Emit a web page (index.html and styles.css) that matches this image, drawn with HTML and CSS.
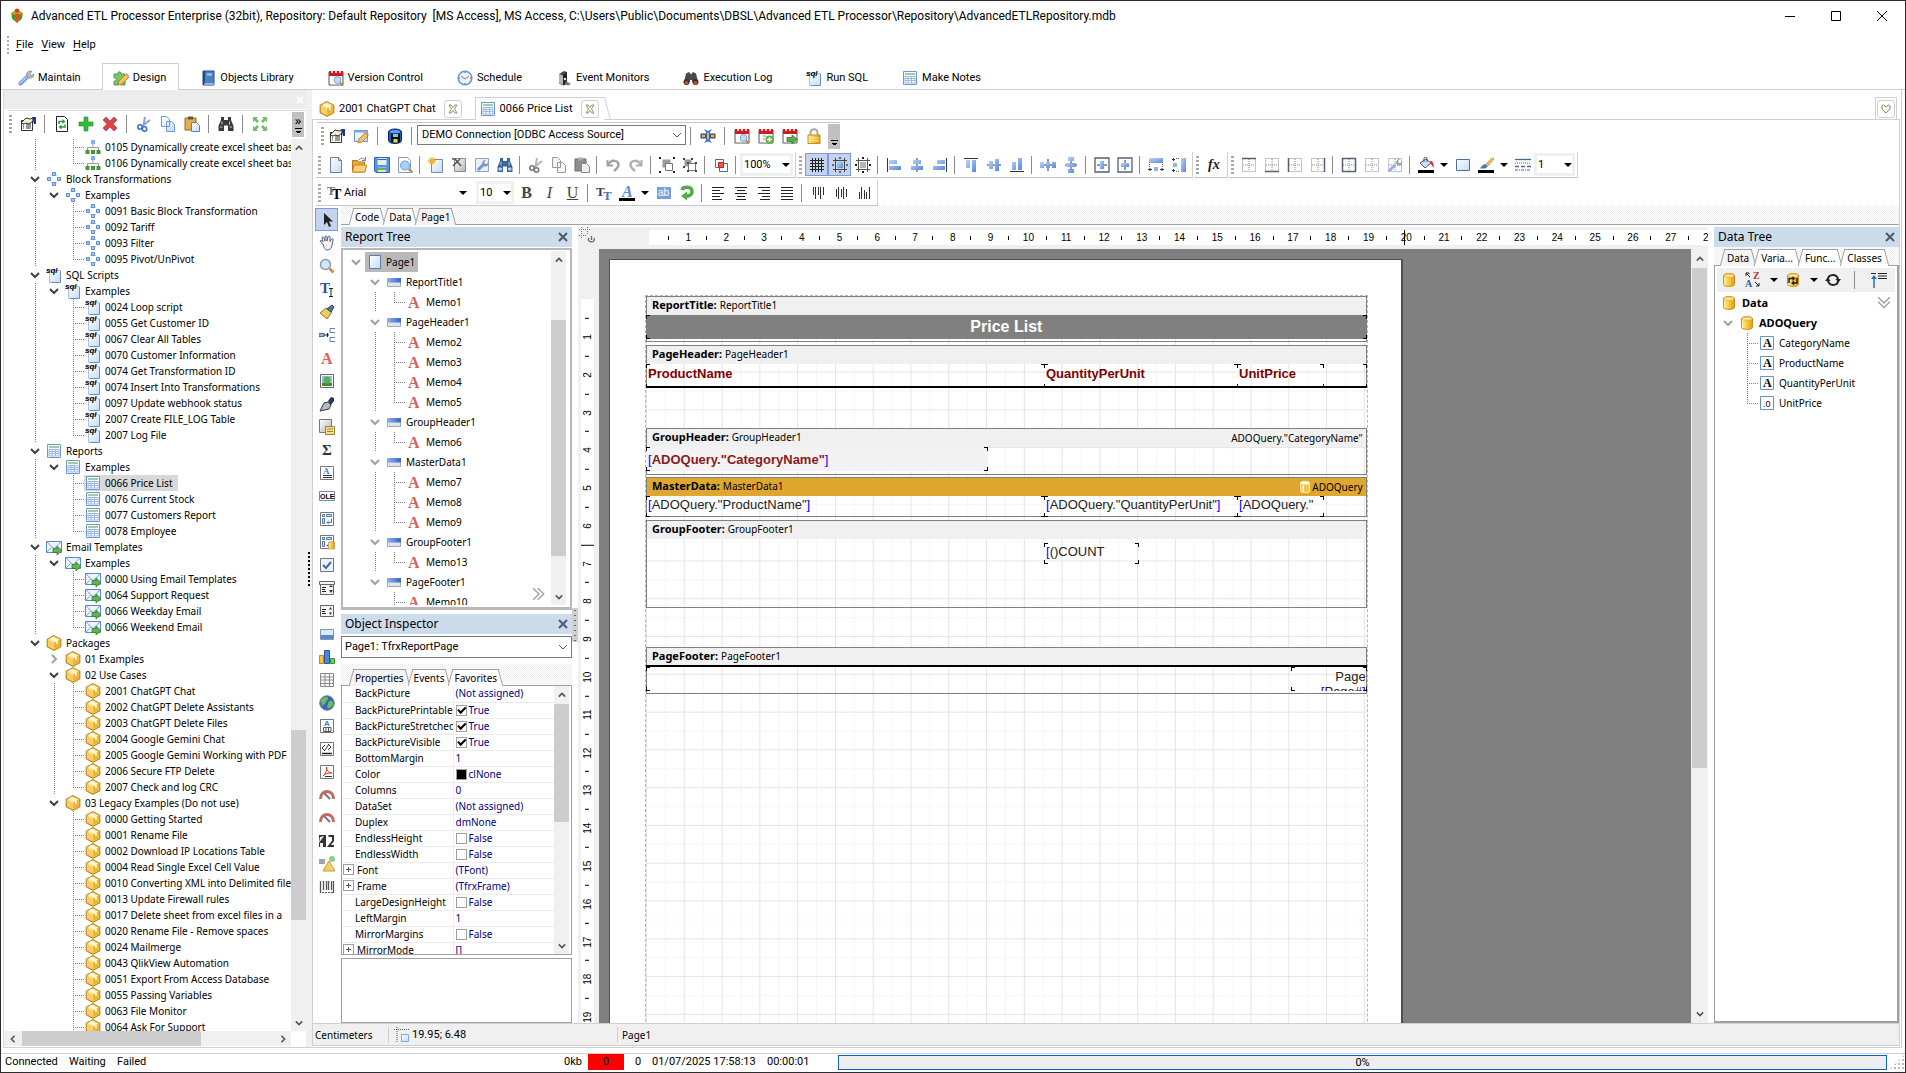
FILE: index.html
```html
<!DOCTYPE html>
<html lang="en">
<head>
  <meta charset="utf-8">
  <title>Advanced ETL Processor Enterprise</title>
  <link rel="stylesheet" href="styles.css">
</head>
<body>

  <!-- gradients -->
  <svg class="defs" aria-hidden="true">
    <linearGradient id="gBlue" x1="0" y1="0" x2="1" y2="1"><stop offset="0" stop-color="#b9d6fb"/><stop offset="1" stop-color="#5b87d8"/></linearGradient>
    <linearGradient id="gPaper" x1="0" y1="0" x2="1" y2="1"><stop offset="0" stop-color="#ffffff"/><stop offset="1" stop-color="#c3daf8"/></linearGradient>
    <linearGradient id="gGold" x1="0" y1="0" x2="1" y2="0"><stop offset="0" stop-color="#fff0a8"/><stop offset=".5" stop-color="#f7c843"/><stop offset="1" stop-color="#e09a1a"/></linearGradient>
    <linearGradient id="gGrey" x1="0" y1="0" x2="1" y2="1"><stop offset="0" stop-color="#ffffff"/><stop offset="1" stop-color="#b4b4b4"/></linearGradient>
    <linearGradient id="gBand" x1="0" y1="0" x2="1" y2="0"><stop offset="0" stop-color="#8fb3ec"/><stop offset="1" stop-color="#3566c0"/></linearGradient>
  </svg>

  <!-- icon sprite -->
  <svg class="sprite" aria-hidden="true">
    <symbol id="logo" viewBox="0 0 16 16"><circle cx="8" cy="3" r="2.500" fill="#c8452a"/><path d="M2 5l3-2 3 2 3-2 3 2-1 6-5 4-5-4z" fill="#c99a1c"/><path d="M3 6l3 1v6l-3-3zM13 6l-3 1v6l3-3z" fill="#3f9a35"/><path d="M6 6h4v6l-2 3-2-3z" fill="#d2562c"/></symbol>
    <symbol id="wrench" viewBox="0 0 16 16"><path d="M2.500 13.500L9 7" stroke="#6f9ae2" stroke-width="4" stroke-linecap="round"/><path d="M2.500 13L9 6.500" stroke="#b7d0f6" stroke-width="1.500" stroke-linecap="round"/><path d="M14 1.500l-2 2 .5 1.500 1.500.5 1.700-1.700c.4 2.200-1 4.200-3.200 4.200-2.500 0-4.200-1.500-4-3.700C8.700 2 11 .3 14 1.500z" fill="#b9bcc2" stroke="#74777e" stroke-width=".7"/></symbol>
    <symbol id="design" viewBox="0 0 16 16"><path d="M1 4h4c-1-3 4-3 3 0h4v3c3-1 3 3 0 3v5H8c1-3-4-3-3 0H1v-4c3 1 3-4 0-3z" fill="#7cc46c" stroke="#3c8a39" stroke-width=".8"/><path d="M5 15l1-4 7-7 3 3-7 7z" fill="#f3c75a" stroke="#a8741d" stroke-width=".8"/><path d="M12 4.500l1.500-1.500 3 3-1.500 1.500z" fill="#e79a8e"/></symbol>
    <symbol id="book" viewBox="0 0 16 16"><path d="M3 1h11v14H3z" fill="#4d83c4" stroke="#1e4a86"/><path d="M3 1h2v14H3z" fill="#20487f"/><path d="M7 3.500h5v2H7z" fill="#a9caf0"/><path d="M4 14h10" stroke="#dfe9f6"/></symbol>
    <symbol id="cal" viewBox="0 0 16 16"><path d="M1 2h14v13H1z" fill="#fff" stroke="#555"/><path d="M1 1h14v5H1z" fill="#d31920"/><path d="M4 0v3M8 0v3M12 0v3" stroke="#fff" stroke-width="1.500"/><path d="M3 14.500h10" stroke="#bbb"/></symbol>
    <symbol id="calfind" viewBox="0 0 16 16"><use href="#cal"/><circle cx="9.500" cy="10" r="3.500" fill="#bcdcf5" stroke="#7fa6cc"/><path d="M12 12.500l3 3" stroke="#b98550" stroke-width="2"/></symbol>
    <symbol id="caladd" viewBox="0 0 16 16"><use href="#cal"/><path d="M5 8h3M5 11h2" stroke="#888"/><circle cx="11.500" cy="11.500" r="4" fill="#5cae42"/><path d="M11.500 9v5M9 11.500h5" stroke="#fff" stroke-width="1.500"/></symbol>
    <symbol id="calgo" viewBox="0 0 16 16"><use href="#cal"/><path d="M5 9.500h5V7l5.500 4.500L10 16v-2.500H5z" fill="#57b04a" stroke="#2c7d28" stroke-width=".8"/></symbol>
    <symbol id="clock" viewBox="0 0 16 16"><circle cx="8" cy="8" r="6.800" fill="#edf4fe" stroke="#6d95d8" stroke-width="1.600"/><path d="M4 6l4 3 4-3" fill="none" stroke="#b06a50"/><path d="M8 2v1M8 13v1M2 8h1M13 8h1" stroke="#456"/></symbol>
    <symbol id="server" viewBox="0 0 16 16"><path d="M3 4l5-3 3 1v12l-4 1.500-4-2z" fill="#444"/><path d="M3 4l4 1.500V15l-4-2z" fill="#b5b5b5"/><path d="M7 5.500L11 2v12l-4 1z" fill="#222"/><circle cx="9" cy="9" r="1.300" fill="#ddd"/><path d="M10 11l5 3-3 1.500-3-1z" fill="#777"/></symbol>
    <symbol id="execlog" viewBox="0 0 16 16"><path d="M1 12L3 3.500 6 2l1.500 2h1L10 2l3 1.500 2 8.500" fill="#4a4a4a"/><path d="M6.500 6h3v4h-3z" fill="#4a4a4a"/><circle cx="3.500" cy="12" r="3" fill="#333"/><circle cx="12.500" cy="12" r="3" fill="#333"/><circle cx="3.500" cy="12.800" r="1.800" fill="#d8452b"/><circle cx="12.500" cy="12.800" r="1.800" fill="#d8452b"/><path d="M7 10h2v6H7z" fill="#fff"/></symbol>
    <symbol id="sql" viewBox="0 0 16 16"><path d="M3.500 3.500h11v12h-11z" fill="url(#gPaper)" stroke="#a9c3e6"/><path d="M14.500 4v11.500H5" fill="none" stroke="#6d8fbe"/><text x="0" y="6" font-family="Liberation Sans" font-size="8" font-weight="bold" font-style="italic">sql</text></symbol>
    <symbol id="table" viewBox="0 0 16 16"><path d="M1.500 1.500h13v13h-13z" fill="#fff" stroke="#6c97d6"/><path d="M3 4h10" stroke="#7cc274" stroke-width="1.500"/><path d="M3 6.500h10v6.500H3zM3 8.500h10M3 10.500h10M6 6.500V13M9.500 6.500V13" fill="none" stroke="#8fb0e2" stroke-width=".9"/></symbol>
    <symbol id="props" viewBox="0 0 16 16"><path d="M1.500 4.500h11v10h-11z" fill="#fff" stroke="#333"/><path d="M3 8h1M3 10h1M3 12h1M6 8h5M6 10h5M6 12h5" stroke="#333"/><path d="M1 7l5-5 4 1 3-1v3l-4 3-3-1-2 1z" fill="#f5efd2" stroke="#222" stroke-width=".9"/><path d="M12 1h4v7h-2z" fill="#27348e"/></symbol>
    <symbol id="edit" viewBox="0 0 16 16"><path d="M1.500 2.500h13v11h-13z" fill="url(#gPaper)" stroke="#6d97d4"/><path d="M1.500 2.500h13v2h-13z" fill="#7aa7e6"/><path d="M5 15l1-4 6-6 3 3-6 6z" fill="#f3c35c" stroke="#b37728" stroke-width=".8"/><path d="M12 5l1-1 3 3-1 1z" fill="#d98583"/></symbol>
    <symbol id="refresh" viewBox="0 0 16 16"><path d="M2.500.5h8l3 3v12h-11z" fill="#fff" stroke="#222"/><path d="M5 8V5.500h4" fill="none" stroke="#2f9b35" stroke-width="1.500"/><path d="M8.500 3l3 2.500-3 2.500z" fill="#2f9b35"/><path d="M11 8.500V11H7" fill="none" stroke="#2f9b35" stroke-width="1.500"/><path d="M7.500 8.500l-3 2.500 3 2.500z" fill="#2f9b35"/></symbol>
    <symbol id="plus" viewBox="0 0 16 16"><path d="M6 1h4v5h5v4h-5v5H6v-5H1V6h5z" fill="#2dbd36" stroke="#1b8a24" stroke-width=".6"/></symbol>
    <symbol id="cross" viewBox="0 0 16 16"><path d="M1 4l3-3 4 4 4-4 3 3-4 4 4 4-3 3-4-4-4 4-3-3 4-4z" fill="#e0434a" stroke="#a8232b" stroke-width=".6"/></symbol>
    <symbol id="cut" viewBox="0 0 16 16"><path d="M9 1L7.500 9.500M14 4l-7.500 6" stroke="#86a5cf" stroke-width="2"/><circle cx="4" cy="11" r="2.200" fill="none" stroke="#3d72c4" stroke-width="1.600"/><circle cx="8.500" cy="13" r="2.200" fill="none" stroke="#3d72c4" stroke-width="1.600"/></symbol>
    <symbol id="cutg" viewBox="0 0 16 16"><path d="M9 1L7.500 9.500M14 4l-7.500 6" stroke="#b5b5b5" stroke-width="2"/><circle cx="4" cy="11" r="2.200" fill="none" stroke="#787878" stroke-width="1.600"/><circle cx="8.500" cy="13" r="2.200" fill="none" stroke="#787878" stroke-width="1.600"/></symbol>
    <symbol id="copy" viewBox="0 0 16 16"><path d="M1.500.5h5l3 3v7h-8zM6.500 5.500h5l3 3v7h-8z" fill="url(#gPaper)" stroke="#6c98d8"/></symbol>
    <symbol id="copyg" viewBox="0 0 16 16"><path d="M1.500.5h5l3 3v7h-8zM6.500 5.500h5l3 3v7h-8z" fill="#f4f4f4" stroke="#999"/></symbol>
    <symbol id="paste" viewBox="0 0 16 16"><path d="M1 2h11v12H1z" fill="#e0b04c" stroke="#96691c"/><path d="M4 .5h5v3H4z" fill="#555"/><path d="M7.500 6.500h5l3 3v6h-8z" fill="url(#gPaper)" stroke="#5f80b0"/></symbol>
    <symbol id="pasteg" viewBox="0 0 16 16"><path d="M1 2h11v12H1z" fill="#8d8d8d" stroke="#6d6d6d"/><path d="M4 .5h5v3H4z" fill="#aaa"/><path d="M7.500 6.500h5l3 3v6h-8z" fill="#eee" stroke="#888"/></symbol>
    <symbol id="binoc" viewBox="0 0 16 16"><path d="M3 1h3v3h4V1h3v3l2.500 6v5H10V9.500H6V15H.5v-5L3 4z" fill="#3a3a3a"/><path d="M2 11h2.500M11.500 11H14M4 5.500v3M11.500 5.500v3" stroke="#c9c9c9"/></symbol>
    <symbol id="find" viewBox="0 0 16 16"><path d="M3 1h3v3h4V1h3v3l2.500 6v5H10V9.500H6V15H.5v-5L3 4z" fill="#3c6496"/><path d="M2 11h2.500v2H2zM11.500 11H14v2h-2.500zM4 5v3.500M12 5v3.500" stroke="#b5d2f5" fill="#b5d2f5"/></symbol>
    <symbol id="expand" viewBox="0 0 16 16"><path d="M1 1h5L4.500 2.500 7 5 5 7 2.500 4.500 1 6zM15 1v5l-1.500-1.500L11 7 9 5l2.500-2.500L10 1zM1 15v-5l1.500 1.500L5 9l2 2-2.500 2.500L6 15zM15 15h-5l1.500-1.500L9 11l2-2 2.500 2.500L15 10z" fill="#71c169"/></symbol>
    <symbol id="org" viewBox="0 0 16 16"><path d="M8 5v4M2.500 11V8.500h11V11" fill="none" stroke="#999"/><path d="M6 1h4v4H6z" fill="#7db0ef"/><path d="M.5 11h4v4h-4zM6 11h4v4H6zM11.500 11h4v4h-4z" fill="#3f9a35"/></symbol>
    <symbol id="block" viewBox="0 0 16 16"><path d="M6.500 1.500h3v3h-3zM1.500 6.500h3v3h-3zM11.500 6.500h3v3h-3zM6.500 11.500h3v3h-3z" fill="#a9ccf8" stroke="#5a8ad2"/><path d="M5 5l1-1M10 4l1 1M5 11l1 1M11 11l-1 1" stroke="#b5c9e8"/></symbol>
    <symbol id="mail" viewBox="0 0 16 16"><path d="M.5 2.500h15v11H.5z" fill="#eef5fe" stroke="#5888cf"/><path d="M1 3l7 6.500L15 3M1 13l5-5M15 13l-5-5" fill="none" stroke="#7fa5dc"/><path d="M7 9.500h4V7l5 4.500-5 4.500v-2.500H7z" fill="#5fb554" stroke="#2e7b2a" stroke-width=".8"/></symbol>
    <symbol id="pack" viewBox="0 0 16 16"><path d="M8 .7l6.800 3.600v7.400L8 15.300l-6.800-3.600V4.300z" fill="#f8cf63" stroke="#b98a1d" stroke-width="1.200"/><path d="M8 1.500l5.800 3L8 7.700 2.200 4.500z" fill="#fde9a9"/><path d="M8 7.700v7l5.800-3.200v-7z" fill="#eeb33a"/><path d="M5 3l6 3v3" fill="none" stroke="#fffbe5" stroke-width="1.500"/></symbol>

    <symbol id="dbsave" viewBox="0 0 16 16"><path d="M1.500 4C1.500 0 14.500 0 14.500 4v8.500c0 4-13 4-13 0z" fill="#1c59c0" stroke="#09285e"/><ellipse cx="8" cy="3.700" rx="5" ry="1.800" fill="#5fa0f0"/><path d="M4 5.500h9v9H4z" fill="#111"/><path d="M6 6h5v3H6z" fill="#7fc4ea"/><path d="M6.500 11h4v3.500h-4z" fill="#d6e04a"/></symbol>
    <symbol id="rename" viewBox="0 0 16 16"><path d="M4 1l4 2 4-2-2 3.500V12l2 3-4-1.500L4 15l2-3V4.500z" fill="#3d7be0"/><path d="M.5 5.500h15v5H.5z" fill="#555"/><path d="M2 8h3M8 5v6M11 8h3" stroke="#ddd" stroke-width="1.500"/></symbol>
    <symbol id="lock" viewBox="0 0 16 16"><path d="M4.500 8V5c0-5 7-5 7 0v3" fill="none" stroke="#a9a9a9" stroke-width="2"/><path d="M2 7h12v8.500H2z" fill="url(#gGold)" stroke="#c98b16"/><path d="M3 10h10M3 12.500h10" stroke="#f9e08a"/></symbol>
    <symbol id="newdoc" viewBox="0 0 16 16"><path d="M2.500.5h8l3 3v12h-11z" fill="url(#gPaper)" stroke="#6b7fa4"/><path d="M10.500.5v3h3" fill="none" stroke="#6b7fa4"/></symbol>
    <symbol id="open" viewBox="0 0 16 16"><path d="M1.500 3.500h5l1 1.500h6v10h-12z" fill="#e9a63c" stroke="#b77418"/><path d="M3 8h12.500L14 15H1.500z" fill="#fbd276" stroke="#c58420"/><path d="M8 3c2-3 5-2 6 0M14.500 0v3.500H11" fill="none" stroke="#5d7fb2"/></symbol>
    <symbol id="save" viewBox="0 0 16 16"><path d="M.5.5h15v15H2l-1.500-1.500z" fill="#5b94dc" stroke="#2f64ae"/><path d="M3.500 1h9v7h-9z" fill="#e3eefb"/><path d="M3.500 2.500h9" stroke="#2f64ae"/><path d="M4 10.500h8V15H4z" fill="#dbe8d4"/><path d="M4 12h8" stroke="#64b445" stroke-width="2"/></symbol>
    <symbol id="preview" viewBox="0 0 16 16"><path d="M1.500.5h9l3 3v12h-12z" fill="#fff" stroke="#8798b8"/><circle cx="8" cy="8.500" r="4.500" fill="#a9d0f8" stroke="#6d9bd0"/><path d="M11.500 12l4 3.500" stroke="#ac8a4e" stroke-width="2"/></symbol>
    <symbol id="newpage" viewBox="0 0 16 16"><path d="M3.500 2.500h11v13h-11z" fill="url(#gPaper)" stroke="#7c8799"/><path d="M0 4h8M4 0v8M1.200 1.200l5.600 5.600M6.800 1.200L1.200 6.800" stroke="#f0b520" stroke-width="1.300"/></symbol>
    <symbol id="delpage" viewBox="0 0 16 16"><path d="M3.500 1.500h11v13h-11z" fill="url(#gGrey)" stroke="#8c8c8c"/><path d="M1 2h3l6 7M9 2L2 9" stroke="#555" stroke-width="1.500" fill="none"/></symbol>
    <symbol id="psetup" viewBox="0 0 16 16"><path d="M1.500 1.500h13v13h-13z" fill="#e8f0fc" stroke="#8aa4cc"/><path d="M4 13l5-5" stroke="#6d97dc" stroke-width="3"/><path d="M12 3l-2 2 1 2h2l1-2c1 3-1 5-3 4.500-3-.5-3.500-3-2.500-4.500S11 2.500 12 3z" fill="#8c93a0"/></symbol>
    <symbol id="undo" viewBox="0 0 16 16"><path d="M2.500 3v5.500H8" fill="none" stroke="#a2a2a2" stroke-width="2"/><path d="M3 8C6 2 14 3 13.500 8c-.3 3-2.500 4.500-4.500 6" fill="none" stroke="#a2a2a2" stroke-width="2.500"/></symbol>
    <symbol id="redo" viewBox="0 0 16 16"><path d="M13.500 3v5.500H8" fill="none" stroke="#b0b0b0" stroke-width="2"/><path d="M13 8C10 2 2 3 2.500 8c.3 3 2.500 4.500 4.500 6" fill="none" stroke="#b0b0b0" stroke-width="2.500"/></symbol>
    <symbol id="group" viewBox="0 0 16 16"><path d="M3.500 2.500h8v8h-8z" fill="#9b9b9b"/><path d="M6.500 6.500h7v7h-7z" fill="#fff" stroke="#777"/><path d="M0 0h2v2H0zM14 0h2v2h-2zM0 14h2v2H0zM14 14h2v2h-2z" fill="#222"/></symbol>
    <symbol id="ungroup" viewBox="0 0 16 16"><path d="M2.500 2.500h7v7h-7z" fill="#9b9b9b"/><path d="M6.500 6.500h7v7h-7z" fill="#fff" stroke="#777"/><path d="M1 1h2v2H1zM9 1h2v2H9zM1 9h2v2H1zM5 5h2v2H5zM13 5h2v2h-2zM5 13h2v2H5zM13 13h2v2h-2z" fill="#444"/></symbol>
    <symbol id="overlap" viewBox="0 0 16 16"><path d="M2.500 2.500h8v8h-8z" fill="#fff" stroke="#4a6da8"/><path d="M6.500 6.500h8v8h-8z" fill="none" stroke="#4a6da8"/><path d="M5.500 5.500h5v5h-5z" fill="#f2564a" stroke="#cf1f1a"/></symbol>
    <symbol id="grid" viewBox="0 0 16 16"><path d="M3.500 1v14M6.500 1v14M9.500 1v14M12.500 1v14M1 3.500h14M1 6.500h14M1 9.500h14M1 12.500h14" stroke="#222"/></symbol>
    <symbol id="snap" viewBox="0 0 16 16"><path d="M5 5h6v6H5z" fill="url(#gBlue)"/><path d="M3.500 1v14M12.500 1v14M1 3.500h14M1 12.500h14" stroke="#444"/><path d="M8 0v2M8 14v2M0 8h2M14 8h2" stroke="#444" stroke-width="1.500"/></symbol>
    <symbol id="fit" viewBox="0 0 16 16"><path d="M5 5h6v6H5z" fill="#b4b4b4"/><path d="M3.500 1v14M12.500 1v14M1 3.500h14M1 12.500h14" stroke="#555"/><path d="M8 0v2M8 14v2M0 8h2M14 8h2" stroke="#222" stroke-width="2"/></symbol>
    <symbol id="al" viewBox="0 0 16 16"><path d="M1.500 1v14" stroke="#333"/><path d="M3 3h8v4H3zM3 9h12v4H3z" fill="url(#gBlue)"/></symbol>
    <symbol id="ac" viewBox="0 0 16 16"><path d="M8 1v14" stroke="#333"/><path d="M4 3h8v4H4zM2 9h12v4H2z" fill="url(#gBlue)"/></symbol>
    <symbol id="ar" viewBox="0 0 16 16"><path d="M14.500 1v14" stroke="#333"/><path d="M5 3h8v4H5zM1 9h12v4H1z" fill="url(#gBlue)"/></symbol>
    <symbol id="at" viewBox="0 0 16 16"><path d="M1 1.500h14" stroke="#333"/><path d="M3 3h4v8H3zM9 3h4v12H9z" fill="url(#gBlue)"/></symbol>
    <symbol id="am" viewBox="0 0 16 16"><path d="M1 8h14" stroke="#333"/><path d="M3 4h4v8H3zM9 2h4v12H9z" fill="url(#gBlue)"/></symbol>
    <symbol id="ab" viewBox="0 0 16 16"><path d="M1 14.500h14" stroke="#333"/><path d="M3 5h4v8H3zM9 1h4v12H9z" fill="url(#gBlue)"/></symbol>
    <symbol id="dh" viewBox="0 0 16 16"><path d="M0 8h16M8 2v12" stroke="#333"/><path d="M0 5h4v6H0zM6 5h4v6H6zM12 5h4v6h-4z" fill="url(#gBlue)"/></symbol>
    <symbol id="dv" viewBox="0 0 16 16"><path d="M8 0v16M2 8h12" stroke="#333"/><path d="M5 0h6v4H5zM3 6h10v4H3zM5 12h6v4H5z" fill="url(#gBlue)"/></symbol>
    <symbol id="ch" viewBox="0 0 16 16"><path d="M1 1h14v14H1z" fill="#fff" stroke="#555f75" stroke-width="1.300"/><path d="M3 8h10" stroke="#333"/><path d="M6 4h4v8H6z" fill="url(#gBlue)"/></symbol>
    <symbol id="cv" viewBox="0 0 16 16"><path d="M1 1h14v14H1z" fill="#fff" stroke="#555f75" stroke-width="1.300"/><path d="M8 3v10" stroke="#333"/><path d="M4 6h8v4H4z" fill="url(#gBlue)"/></symbol>
    <symbol id="sw" viewBox="0 0 16 16"><path d="M1 1h14v5H1z" fill="url(#gBlue)"/><path d="M6 10h4v4H6z" fill="#8db7f2"/><path d="M1.500 7v3M14.500 7v3" stroke="#555" stroke-dasharray="1 1"/><path d="M0 12.500h4M2 11v3M12 12.500h4M14 11v3" stroke="#333"/></symbol>
    <symbol id="sh" viewBox="0 0 16 16"><path d="M10 1h5v14h-5z" fill="url(#gBlue)"/><path d="M2 6h4v4H2z" fill="#8db7f2"/><path d="M5 1.500h4M5 14.500h4" stroke="#555" stroke-dasharray="1 1"/><path d="M1 2.500h3M2.500 1v3M1 13.500h3M2.500 12v3" stroke="#333"/></symbol>
    <symbol id="fx" viewBox="0 0 16 16"><text x="2" y="12" font-family="Liberation Serif" font-size="14" font-weight="bold" font-style="italic" fill="#222">fx</text></symbol>
    <symbol id="bdot" viewBox="0 0 16 16"><path d="M1.500 1.500h13v13h-13zM8 2v12M2 8h12" fill="none" stroke="#888" stroke-dasharray="1 1"/></symbol>
    <symbol id="bt" viewBox="0 0 16 16"><use href="#bdot"/><path d="M1 1.500h14" stroke="#555f75" stroke-width="1.500"/></symbol>
    <symbol id="bb" viewBox="0 0 16 16"><use href="#bdot"/><path d="M1 14.500h14" stroke="#555f75" stroke-width="1.500"/></symbol>
    <symbol id="bl" viewBox="0 0 16 16"><use href="#bdot"/><path d="M1.500 1v14" stroke="#555f75" stroke-width="1.500"/></symbol>
    <symbol id="br" viewBox="0 0 16 16"><use href="#bdot"/><path d="M14.500 1v14" stroke="#555f75" stroke-width="1.500"/></symbol>
    <symbol id="ba" viewBox="0 0 16 16"><use href="#bdot"/><path d="M1.500 1.500h13v13h-13z" fill="none" stroke="#555f75" stroke-width="1.500"/></symbol>
    <symbol id="bset" viewBox="0 0 16 16"><use href="#bdot"/><path d="M2 14l6-6" stroke="#8fb0ea" stroke-width="3"/><path d="M13 2l-2 2 1 2h2l1-2c1 3-1 5-3 4.500-3-.5-3.500-3-2.500-4.500S12 1.500 13 2z" fill="#9aa0aa"/></symbol>
    <symbol id="bucket" viewBox="0 0 16 16"><path d="M0 13h16v3H0z" fill="#000"/><path d="M2 6l6-4 5 4-6 5z" fill="#cfe0f5" stroke="#43597c"/><path d="M6 5V1c0-1 3-1 3 0v4" fill="none" stroke="#43597c"/><path d="M12 4c3 0 4 2 3.500 7L13 7z" fill="#d22e2e"/></symbol>
    <symbol id="rect" viewBox="0 0 16 16"><path d="M1.500 2.500h13v11h-13z" fill="url(#gPaper)" stroke="#4d6da4"/></symbol>
    <symbol id="brush" viewBox="0 0 16 16"><path d="M0 13h16v3H0z" fill="#000"/><path d="M8 7l6-6 2 1-6 7z" fill="#f0c457" stroke="#b08a2c" stroke-width=".7"/><path d="M1 11c3 0 3-4 6-4l2.500 2C9 12 5 12 1 11z" fill="#4a79b8"/></symbol>
    <symbol id="dashes" viewBox="0 0 16 16"><path d="M0 2.500h16" stroke="#3f69a8" stroke-width="1.300"/><path d="M0 6h16" stroke="#3f69a8" stroke-dasharray="1 1"/><path d="M0 9.500h16" stroke="#3f69a8" stroke-width="1.300" stroke-dasharray="4 2"/><path d="M0 13h16" stroke="#3f69a8" stroke-dasharray="3 1 1 1"/></symbol>
    <symbol id="tt" viewBox="0 0 16 16"><text x="0" y="11" font-family="Liberation Serif" font-size="13" font-weight="bold" fill="#333f58">T</text><text x="7" y="15" font-family="Liberation Serif" font-size="13" font-weight="bold" fill="#4878b8">T</text></symbol>
    <symbol id="ttk" viewBox="0 0 16 16"><text x="0" y="10" font-family="Liberation Serif" font-size="12" font-weight="bold" fill="#777">T</text><text x="5" y="14" font-family="Liberation Serif" font-size="14" font-weight="bold">T</text></symbol>
    <symbol id="fc" viewBox="0 0 16 16"><text x="3" y="12" font-family="Liberation Serif" font-size="16" font-weight="bold" font-style="italic" fill="#5a8ad6">A</text><path d="M0 13h16v3H0z"/></symbol>
    <symbol id="hl" viewBox="0 0 16 16"><path d="M1 2h14v12H1z" fill="#7ba0e2"/><text x="2" y="11" font-family="Liberation Sans" font-size="10" fill="#fff">ab</text></symbol>
    <symbol id="rot" viewBox="0 0 16 16"><path d="M3 5c1-4 10-4 10 1.500 0 4-4 5-7 4.500" fill="none" stroke="#57a84e" stroke-width="3.500"/><path d="M8 6.500v9L2 11z" fill="#57a84e"/></symbol>
    <symbol id="tl" viewBox="0 0 16 16"><path d="M2 2.500h12M2 5.500h8M2 8.500h12M2 11.500h8M2 14.500h10" stroke="#222"/></symbol>
    <symbol id="tc" viewBox="0 0 16 16"><path d="M2 2.500h12M4 5.500h8M2 8.500h12M4 11.500h8M3 14.500h10" stroke="#222"/></symbol>
    <symbol id="tr" viewBox="0 0 16 16"><path d="M2 2.500h12M6 5.500h8M2 8.500h12M6 11.500h8M4 14.500h10" stroke="#222"/></symbol>
    <symbol id="tj" viewBox="0 0 16 16"><path d="M2 2.500h12M2 5.500h12M2 8.500h12M2 11.500h12M2 14.500h12" stroke="#222"/></symbol>
    <symbol id="vt" viewBox="0 0 16 16"><path d="M3.500 2v8M5.500 2v12M8.500 2v8M10.500 2v12M13.500 2v8" stroke="#333"/></symbol>
    <symbol id="vm" viewBox="0 0 16 16"><path d="M3.500 4v8M5.500 2v12M8.500 4v8M10.500 2v12M13.500 4v8" stroke="#333"/></symbol>
    <symbol id="vb" viewBox="0 0 16 16"><path d="M3.500 7v7M5.500 2v12M8.500 5v9M10.500 7v7M13.500 2v12" stroke="#333"/></symbol>

    <symbol id="arrow" viewBox="0 0 16 16"><path d="M5 1v12l3-3 2 5 2-1-2-4.500h4z" fill="#222"/></symbol>
    <symbol id="hand" viewBox="0 0 16 16"><path d="M4 9L1.500 7C.5 5.500 2 5 3 6l1 1-1-4c0-1.500 1.500-1.500 2 0L6 6V2c0-1.500 2-1.500 2 0v4l1-4c.5-1.500 2-1 2 0v4.500l1.500-2.500c1-1 2 0 1.500 1L13 10c-.5 3-1.500 5-5 5-2.500 0-3-3-4-6z" fill="#fdf3e6" stroke="#4c6893"/></symbol>
    <symbol id="zoom" viewBox="0 0 16 16"><circle cx="6.500" cy="6.500" r="5" fill="#d3e6fb" stroke="#8b9db8" stroke-width="1.500"/><path d="M10.500 10.500l4 4" stroke="#c69640" stroke-width="3"/></symbol>
    <symbol id="tedit" viewBox="0 0 16 16"><text x="1" y="12" font-family="Liberation Serif" font-size="15" font-weight="bold" fill="#1d5a8c">T</text><path d="M10 7.500h4M12 8v7M10 15.500h4" stroke="#222"/></symbol>
    <symbol id="fmt" viewBox="0 0 16 16"><path d="M1 9l6-5 6 4-5 7z" fill="#e8d05c" stroke="#8b7a26"/><path d="M8 5l5-4 2 2-3 5z" fill="#4f72ad" stroke="#2c426a"/></symbol>
    <symbol id="conn" viewBox="0 0 16 16"><path d="M0 6.500h5v3H0z" fill="#9fb4d2" stroke="#4c6893"/><path d="M5 8h5M8.500 6v4" stroke="#222"/><path d="M16 1.500h-5v4h5M16 10.500h-5v4h5" fill="none" stroke="#5d83bd"/></symbol>
    <symbol id="memo" viewBox="0 0 16 16"><text x="2" y="14" font-family="Liberation Serif" font-size="16" font-weight="bold" fill="#d3635c">A</text></symbol>
    <symbol id="pic" viewBox="0 0 16 16"><path d="M1.500 1.500h13v13h-13z" fill="#fff" stroke="#666"/><path d="M3 3h10v10H3z" fill="#8fc0ef"/><path d="M3 10h10v3H3z" fill="#3f8a3a"/><circle cx="8" cy="7" r="3.500" fill="#5cb04c"/></symbol>
    <symbol id="pen" viewBox="0 0 16 16"><path d="M1 15l4-8 4-1 3 3-2 4z" fill="#b8bcc4" stroke="#333"/><path d="M9 5l3-4 3 1v3l-3 4z" fill="#25365f"/></symbol>
    <symbol id="sub" viewBox="0 0 16 16"><path d="M.5.5h12v13H.5z" fill="url(#gGrey)" stroke="#777"/><path d="M6.500 7.500h9v8h-9z" fill="#f7e28a" stroke="#9a8434"/><path d="M8 10h6M8 12.500h6" stroke="#9a8434"/></symbol>
    <symbol id="sigma" viewBox="0 0 16 16"><text x="3" y="13" font-family="Liberation Serif" font-size="15" font-weight="bold" fill="#333">Σ</text></symbol>
    <symbol id="rich" viewBox="0 0 16 16"><path d="M1.500 1.500h13v13h-13z" fill="#fff" stroke="#777"/><text x="4" y="9" font-family="Liberation Serif" font-size="9" font-weight="bold" fill="#4a79bb">A</text><path d="M4 10.500h9M4 12.500h9" stroke="#333"/></symbol>
    <symbol id="ole" viewBox="0 0 16 16"><path d="M.5 3.500h15v9H.5z" fill="#fff" stroke="#6a8fb8"/><text x="1" y="11" font-family="Liberation Sans" font-size="7" font-weight="bold">OLE</text></symbol>
    <symbol id="ctab" viewBox="0 0 16 16"><path d="M1.500 1.500h13v13h-13z" fill="#fff" stroke="#777"/><path d="M3.500 3.500h2v2h-2zM7.500 3.500h5v2h-5zM3.500 7.500h2v5h-2z" fill="#d5e4f8" stroke="#4c78b8"/><path d="M12.500 7.500v4H8M10 9.500l-2 2 2 2" fill="none" stroke="#4c78b8"/></symbol>
    <symbol id="cdb" viewBox="0 0 16 16"><use href="#ctab"/><path d="M9.500 8h6v7h-6z" fill="url(#gGold)" stroke="#b98a1d" stroke-width=".6"/></symbol>
    <symbol id="chk" viewBox="0 0 16 16"><path d="M1.500 1.500h13v13h-13z" fill="#eef2f8" stroke="#777"/><path d="M4 8l3 3 5-6" fill="none" stroke="#4068b0" stroke-width="2"/></symbol>
    <symbol id="dlg" viewBox="0 0 16 16"><path d="M.5 1.500h15v3H.5zM1.500 4.500h13v10h-13z" fill="#f4f4f4" stroke="#666"/><path d="M3 7.500h4M3 9.500h3M3 11.500h4" stroke="#222"/><path d="M10 7h4l-2-2zM10 10h4l-2 3z" fill="#333"/></symbol>
    <symbol id="dl2" viewBox="0 0 16 16"><path d="M1.500 2.500h13v11h-13z" fill="#f4f4f4" stroke="#666"/><path d="M3 6.500h4M3 8.500h3M3 10.500h4" stroke="#222"/><path d="M10 6.500h3L11.500 4zM10 9.500h3l-1.500 2.500z" fill="#333"/></symbol>
    <symbol id="bandi" viewBox="0 0 16 16"><path d="M1.500 4.500h13v8h-13z" fill="#dfe4ea" stroke="#8796ab" stroke-width=".8"/><path d="M1 4h14v4.500H1z" fill="url(#gBand)"/></symbol>
    <symbol id="bandt" viewBox="0 0 16 16"><path d="M1.500 3.500h13v10h-13z" fill="#dbe9fa" stroke="#7d97bb"/><path d="M2 9h12v4H2z" fill="#5d88c4"/></symbol>
    <symbol id="chart" viewBox="0 0 16 16"><path d="M.5 6.500h4v8h-4z" fill="#f4c53e" stroke="#b98a1d"/><path d="M5.500 1.500h5v13h-5z" fill="#4d87dc" stroke="#2b57a0"/><path d="M11.500 9.500h4v5h-4z" fill="#7bc16a" stroke="#3f8a35"/></symbol>
    <symbol id="tbl" viewBox="0 0 16 16"><path d="M1.500 1.500h13v13h-13zM1.500 5h13M1.500 8h13M1.500 11.500h13M6 1.500v13M10.500 1.500v13" fill="#fff" stroke="#888"/></symbol>
    <symbol id="map" viewBox="0 0 16 16"><circle cx="8" cy="8" r="7.300" fill="#3568b8" stroke="#888"/><path d="M2 5c2-3 6-4 7-2s-2 2-2 4-3 2-3 4-2-3-2-6zM11 6c2-1 3 1 3 3s-3 5-5 4 0-3 0-4 0-2 2-3z" fill="#6abf5a"/></symbol>
    <symbol id="cell" viewBox="0 0 16 16"><path d="M1.500 1.500h13v13h-13z" fill="#fff" stroke="#777"/><text x="5" y="8" font-family="Liberation Sans" font-size="8" font-weight="bold" fill="#4a79bb">A</text><path d="M4.500 9.500h7.500v4H4.500zM7 9.500v4M9.500 9.500v4" fill="none" stroke="#555"/></symbol>
    <symbol id="zip" viewBox="0 0 16 16"><path d="M1.500 1.500h13v13h-13z" fill="#fff" stroke="#777"/><path d="M6 4L3 7l3 3M9 3l3 3-3 3M10 3L6 9" fill="none" stroke="#333"/><path d="M3 12.500h10" stroke="#222" stroke-width="1.500"/></symbol>
    <symbol id="pdf" viewBox="0 0 16 16"><path d="M1.500 1.500h13v13h-13z" fill="#fff" stroke="#777"/><path d="M4 12c3-2 4-6 3.500-9C8 7 10 9 13 9 9 8.500 6 10 4 12z" fill="none" stroke="#d0342c"/><path d="M6 12.500h7" stroke="#333"/></symbol>
    <symbol id="gauge" viewBox="0 0 16 16"><path d="M1.500 12c0-10 13-10 13 0" fill="none" stroke="#c46a62" stroke-width="3"/><path d="M5 6l6 6" stroke="#777" stroke-width="2"/></symbol>
    <symbol id="seg" viewBox="0 0 16 16"><path d="M0 2h7v12H0z" fill="#333"/><path d="M1 4l4-1-5 7zM1 14V10h3v4z" fill="#eee"/><path d="M9.500 3H14v5l-4 5h5" fill="none" stroke="#333" stroke-width="2"/></symbol>
    <symbol id="shape" viewBox="0 0 16 16"><path d="M0 3h6v5H0z" fill="#a5a5a5"/><circle cx="13" cy="3" r="3" fill="#8fcf8c"/><path d="M10 5l6 10H4z" fill="#f0d06a" stroke="#c5a030"/></symbol>
    <symbol id="bar" viewBox="0 0 16 16"><path d="M1.500 2v12M4.500 2v9M7.500 2v9M9.500 2v9M12.500 2v9M14.500 2v12" stroke="#555" stroke-width="1.300"/><path d="M3 13.500h11" stroke="#555" stroke-dasharray="2 1"/></symbol>

    <symbol id="page" viewBox="0 0 16 16"><path d="M2.500 1.500h11v13h-11z" fill="url(#gPaper)" stroke="#5f7ba8"/></symbol>
    <symbol id="db" viewBox="0 0 16 16"><path d="M2.500 3.500c0-2.500 11-2.500 11 0v9c0 2.500-11 2.500-11 0z" fill="url(#gGold)" stroke="#d18f1a"/><ellipse cx="8" cy="3.700" rx="5" ry="1.600" fill="#ffe9a0" stroke="#e3aa2e" stroke-width=".7"/></symbol>
    <symbol id="dbl-light" viewBox="0 0 16 16"><path d="M3 3c0-2 10-2 10 0v10c0 2-10 2-10 0z" fill="#f5c54a" stroke="#fff3d0"/><ellipse cx="8" cy="3.500" rx="5" ry="1.500" fill="#fff"/><path d="M6 6v7" stroke="#fff" stroke-width="1.500"/></symbol>
    <symbol id="dbmap" viewBox="0 0 16 16"><use href="#db"/><path d="M4 11V6.500h4M8 11h4V6" fill="none" stroke="#222" stroke-width="1.500"/><path d="M7.500 4l3 2.500-3 2.500zM9 8.500L6 11l3 2.500z" fill="#222"/></symbol>
    <symbol id="sort" viewBox="0 0 16 16"><text x="0" y="15" font-family="Liberation Serif" font-size="10" font-weight="bold" fill="#2d5aa8">A</text><text x="8" y="7" font-family="Liberation Serif" font-size="10" font-weight="bold" fill="#a5333c">Z</text><path d="M1 1h3v1M1 1v3M1 1l4 4M14 14h-3M14 14v-3M14 14l-4-4" stroke="#222" fill="none"/></symbol>
    <symbol id="sync" viewBox="0 0 16 16"><path d="M3 9c-1-7 8-8 10-2M13 7c1 7-8 8-10 2" fill="none" stroke="#222" stroke-width="2"/><path d="M10.500 7H16l-2.500 3.500zM0 9h5.500L3 5.500z" fill="#222"/></symbol>
    <symbol id="top" viewBox="0 0 16 16"><path d="M0 1.500h5M7 1.500h9M7 4h9M7 6.500h9" stroke="#222"/><path d="M3 16V5" stroke="#3568c0" stroke-width="1.500"/><path d="M0 7l3-4 3 4z" fill="#3568c0"/></symbol>
    <symbol id="fa" viewBox="0 0 16 16"><path d="M1.500 1.500h13v13h-13z" fill="#fff" stroke="#6a93c0"/><text x="4" y="12" font-family="Liberation Serif" font-size="12" font-weight="bold">A</text></symbol>
    <symbol id="f0" viewBox="0 0 16 16"><path d="M1.500 1.500h13v13h-13z" fill="#fff" stroke="#6a93c0"/><text x="4" y="12" font-family="Liberation Sans" font-size="9">.0</text></symbol>
    <symbol id="pos" viewBox="0 0 16 16"><path d="M3 0v16M0 2.500h16" stroke="#555" stroke-dasharray="1 1"/><path d="M7.500 7.500h7v7h-7z" fill="url(#gPaper)" stroke="#7da7e6"/></symbol>
    <symbol id="origin" viewBox="0 0 16 16"><path d="M0 2.500h11M0 8.500h8M2.500 0v11M8.500 0v8" stroke="#777" stroke-dasharray="1 1"/><path d="M10 11c-3 4 7 6 5 0M12.500 9v4" fill="none" stroke="#666" stroke-width="1.300"/></symbol>

    <symbol id="down" viewBox="0 0 10 10"><path d="M1 3l4 4 4-4" fill="none" stroke="currentColor" stroke-width="2"/></symbol>
    <symbol id="thin" viewBox="0 0 10 10"><path d="M1 3l4 4 4-4" fill="none" stroke="currentColor"/></symbol>
    <symbol id="up" viewBox="0 0 10 10"><path d="M1 7l4-4 4 4" fill="none" stroke="currentColor" stroke-width="2"/></symbol>
    <symbol id="left" viewBox="0 0 10 10"><path d="M7 1L3 5l4 4" fill="none" stroke="currentColor" stroke-width="2"/></symbol>
    <symbol id="right" viewBox="0 0 10 10"><path d="M3 1l4 4-4 4" fill="none" stroke="currentColor" stroke-width="2"/></symbol>
    <symbol id="close" viewBox="0 0 10 10"><path d="M1 1l8 8M9 1L1 9" fill="none" stroke="currentColor" stroke-width="2"/></symbol>
    <symbol id="tabx" viewBox="0 0 10 10"><path d="M1 1h2l2 2.500L7 1h2L6.500 5 9 9H7L5 6.500 3 9H1l2.500-4z" fill="none" stroke="#8d8650" stroke-width=".9"/></symbol>
    <symbol id="heart" viewBox="0 0 10 10"><path d="M5 9L1 5V2l1.500-1L5 3l2.500-2L9 2v3z" fill="none" stroke="#8d8650"/></symbol>
    <symbol id="dbl" viewBox="0 0 12 12"><path d="M1 1l5 5 5-5M1 5l5 5 5-5" fill="none" stroke="#a0a0a0" stroke-width="1.200"/></symbol>
    <symbol id="min" viewBox="0 0 10 10"><path d="M0 5.500h10" stroke="#000"/></symbol>
    <symbol id="max" viewBox="0 0 10 10"><path d="M.5.5h9v9h-9z" fill="none" stroke="#000"/></symbol>
    <symbol id="quit" viewBox="0 0 10 10"><path d="M0 0l10 10M10 0L0 10" stroke="#000"/></symbol>
  </svg>

  <header class="titlebar">
    <svg class="ico"><use href="#logo"/></svg>
    <h1>Advanced ETL Processor Enterprise (32bit), Repository: Default Repository&nbsp; [MS Access], MS Access, C:\Users\Public\Documents\DBSL\Advanced ETL Processor\Repository\AdvancedETLRepository.mdb</h1>
    <button aria-label="Minimize"><svg><use href="#min"/></svg></button>
    <button aria-label="Maximize"><svg><use href="#max"/></svg></button>
    <button aria-label="Close"><svg><use href="#quit"/></svg></button>
  </header>

  <nav class="menubar">
    <i class="grip"></i>
    <a href="#"><u>F</u>ile</a>
    <a href="#"><u>V</u>iew</a>
    <a href="#"><u>H</u>elp</a>
  </nav>

  <nav class="main-tabs">
    <button><svg class="ico"><use href="#wrench"/></svg>Maintain</button>
    <button class="active"><svg class="ico"><use href="#design"/></svg>Design</button>
    <button><svg class="ico"><use href="#book"/></svg>Objects Library</button>
    <button><svg class="ico"><use href="#calfind"/></svg>Version Control</button>
    <button><svg class="ico"><use href="#clock"/></svg>Schedule</button>
    <button><svg class="ico"><use href="#server"/></svg>Event Monitors</button>
    <button><svg class="ico"><use href="#execlog"/></svg>Execution Log</button>
    <button><svg class="ico"><use href="#sql"/></svg>Run SQL</button>
    <button><svg class="ico"><use href="#table"/></svg>Make Notes</button>
  </nav>

  <div class="workspace">

    <aside class="objects">
      <div class="dock-head"><button aria-label="Close panel"><svg><use href="#close"/></svg></button></div>
      <div class="toolbar">
        <i class="grip"></i>
        <button aria-label="Properties"><svg><use href="#props"/></svg></button>
        <i class="sep"></i>
        <button aria-label="Refresh"><svg><use href="#refresh"/></svg></button>
        <button aria-label="Add"><svg><use href="#plus"/></svg></button>
        <button aria-label="Delete"><svg><use href="#cross"/></svg></button>
        <i class="sep"></i>
        <button aria-label="Cut"><svg><use href="#cut"/></svg></button>
        <button aria-label="Copy"><svg><use href="#copy"/></svg></button>
        <button aria-label="Paste"><svg><use href="#paste"/></svg></button>
        <i class="sep"></i>
        <button aria-label="Find"><svg><use href="#binoc"/></svg></button>
        <i class="sep"></i>
        <button aria-label="Expand"><svg><use href="#expand"/></svg></button>
        <button class="more" aria-label="More"><span>»</span></button>
      </div>

      <div class="tree-wrap">
        <ul class="tree">
          <li class="branch"><ul><li class="branch"><ul>
            <li class="leaf"><svg class="ico"><use href="#org"/></svg>0105 Dynamically create excel sheet based on template</li>
            <li class="leaf"><svg class="ico"><use href="#org"/></svg>0106 Dynamically create excel sheet based on template</li>
          </ul></li></ul></li>
          <li class="branch">
            <div class="node"><svg class="tw"><use href="#down"/></svg><svg class="ico"><use href="#block"/></svg>Block Transformations</div>
            <ul><li class="branch">
              <div class="node"><svg class="tw"><use href="#down"/></svg><svg class="ico"><use href="#block"/></svg>Examples</div>
              <ul>
                <li class="leaf"><svg class="ico"><use href="#block"/></svg>0091 Basic Block Transformation</li>
                <li class="leaf"><svg class="ico"><use href="#block"/></svg>0092 Tariff</li>
                <li class="leaf"><svg class="ico"><use href="#block"/></svg>0093 Filter</li>
                <li class="leaf"><svg class="ico"><use href="#block"/></svg>0095 Pivot/UnPivot</li>
              </ul>
            </li></ul>
          </li>
          <li class="branch">
            <div class="node"><svg class="tw"><use href="#down"/></svg><svg class="ico"><use href="#sql"/></svg>SQL Scripts</div>
            <ul><li class="branch">
              <div class="node"><svg class="tw"><use href="#down"/></svg><svg class="ico"><use href="#sql"/></svg>Examples</div>
              <ul>
                <li class="leaf"><svg class="ico"><use href="#sql"/></svg>0024 Loop script</li>
                <li class="leaf"><svg class="ico"><use href="#sql"/></svg>0055 Get Customer ID</li>
                <li class="leaf"><svg class="ico"><use href="#sql"/></svg>0067 Clear All Tables</li>
                <li class="leaf"><svg class="ico"><use href="#sql"/></svg>0070 Customer Information</li>
                <li class="leaf"><svg class="ico"><use href="#sql"/></svg>0074 Get Transformation ID</li>
                <li class="leaf"><svg class="ico"><use href="#sql"/></svg>0074 Insert Into Transformations</li>
                <li class="leaf"><svg class="ico"><use href="#sql"/></svg>0097 Update webhook status</li>
                <li class="leaf"><svg class="ico"><use href="#sql"/></svg>2007 Create FILE_LOG Table</li>
                <li class="leaf"><svg class="ico"><use href="#sql"/></svg>2007 Log File</li>
              </ul>
            </li></ul>
          </li>
          <li class="branch">
            <div class="node"><svg class="tw"><use href="#down"/></svg><svg class="ico"><use href="#table"/></svg>Reports</div>
            <ul><li class="branch">
              <div class="node"><svg class="tw"><use href="#down"/></svg><svg class="ico"><use href="#table"/></svg>Examples</div>
              <ul>
                <li class="leaf selected"><span><svg class="ico"><use href="#table"/></svg>0066 Price List</span></li>
                <li class="leaf"><svg class="ico"><use href="#table"/></svg>0076 Current Stock</li>
                <li class="leaf"><svg class="ico"><use href="#table"/></svg>0077 Customers Report</li>
                <li class="leaf"><svg class="ico"><use href="#table"/></svg>0078 Employee</li>
              </ul>
            </li></ul>
          </li>
          <li class="branch">
            <div class="node"><svg class="tw"><use href="#down"/></svg><svg class="ico"><use href="#mail"/></svg>Email Templates</div>
            <ul><li class="branch">
              <div class="node"><svg class="tw"><use href="#down"/></svg><svg class="ico"><use href="#mail"/></svg>Examples</div>
              <ul>
                <li class="leaf"><svg class="ico"><use href="#mail"/></svg>0000 Using Email Templates</li>
                <li class="leaf"><svg class="ico"><use href="#mail"/></svg>0064 Support Request</li>
                <li class="leaf"><svg class="ico"><use href="#mail"/></svg>0066 Weekday Email</li>
                <li class="leaf"><svg class="ico"><use href="#mail"/></svg>0066 Weekend Email</li>
              </ul>
            </li></ul>
          </li>
          <li class="branch">
            <div class="node"><svg class="tw"><use href="#down"/></svg><svg class="ico"><use href="#pack"/></svg>Packages</div>
            <ul>
              <li class="branch"><div class="node closed"><svg class="tw"><use href="#right"/></svg><svg class="ico"><use href="#pack"/></svg>01 Examples</div></li>
              <li class="branch">
                <div class="node"><svg class="tw"><use href="#down"/></svg><svg class="ico"><use href="#pack"/></svg>02 Use Cases</div>
                <ul>
                  <li class="leaf"><svg class="ico"><use href="#pack"/></svg>2001 ChatGPT Chat</li>
                  <li class="leaf"><svg class="ico"><use href="#pack"/></svg>2002 ChatGPT Delete Assistants</li>
                  <li class="leaf"><svg class="ico"><use href="#pack"/></svg>2003 ChatGPT Delete Files</li>
                  <li class="leaf"><svg class="ico"><use href="#pack"/></svg>2004 Google Gemini Chat</li>
                  <li class="leaf"><svg class="ico"><use href="#pack"/></svg>2005 Google Gemini Working with PDF</li>
                  <li class="leaf"><svg class="ico"><use href="#pack"/></svg>2006 Secure FTP Delete</li>
                  <li class="leaf"><svg class="ico"><use href="#pack"/></svg>2007 Check and log CRC</li>
                </ul>
              </li>
              <li class="branch">
                <div class="node"><svg class="tw"><use href="#down"/></svg><svg class="ico"><use href="#pack"/></svg>03 Legacy Examples (Do not use)</div>
                <ul>
                  <li class="leaf"><svg class="ico"><use href="#pack"/></svg>0000 Getting Started</li>
                  <li class="leaf"><svg class="ico"><use href="#pack"/></svg>0001 Rename File</li>
                  <li class="leaf"><svg class="ico"><use href="#pack"/></svg>0002 Download IP Locations Table</li>
                  <li class="leaf"><svg class="ico"><use href="#pack"/></svg>0004 Read Single Excel Cell Value</li>
                  <li class="leaf"><svg class="ico"><use href="#pack"/></svg>0010 Converting XML into Delimited file</li>
                  <li class="leaf"><svg class="ico"><use href="#pack"/></svg>0013 Update Firewall rules</li>
                  <li class="leaf"><svg class="ico"><use href="#pack"/></svg>0017 Delete sheet from excel files in a</li>
                  <li class="leaf"><svg class="ico"><use href="#pack"/></svg>0020 Rename File - Remove spaces</li>
                  <li class="leaf"><svg class="ico"><use href="#pack"/></svg>0024 Mailmerge</li>
                  <li class="leaf"><svg class="ico"><use href="#pack"/></svg>0043 QlikView Automation</li>
                  <li class="leaf"><svg class="ico"><use href="#pack"/></svg>0051 Export From Access Database</li>
                  <li class="leaf"><svg class="ico"><use href="#pack"/></svg>0055 Passing Variables</li>
                  <li class="leaf"><svg class="ico"><use href="#pack"/></svg>0063 File Monitor</li>
                  <li class="leaf more-below"><svg class="ico"><use href="#pack"/></svg>0064 Ask For Support</li>
                </ul>
              </li>
            </ul>
          </li>
        </ul>
        <div class="vscroll tree-scroll">
          <button aria-label="Scroll up"><svg><use href="#up"/></svg></button>
          <div class="track"><div class="thumb"></div></div>
          <button aria-label="Scroll down"><svg><use href="#down"/></svg></button>
        </div>
      </div>
      <div class="hscroll">
        <button aria-label="Scroll left"><svg><use href="#left"/></svg></button>
        <div class="track"><div class="thumb"></div></div>
        <button aria-label="Scroll right"><svg><use href="#right"/></svg></button>
      </div>
    </aside>

    <div class="splitter"><i></i></div>

    <main class="documents">
      <div class="doc-tabs">
        <div class="doc-tab"><svg class="ico"><use href="#pack"/></svg>2001 ChatGPT Chat<button aria-label="Close tab"><svg><use href="#tabx"/></svg></button></div>
        <div class="doc-tab active"><svg class="ico"><use href="#table"/></svg>0066 Price List<button aria-label="Close tab"><svg><use href="#tabx"/></svg></button></div>
        <div class="doc-list"><button aria-label="Tab list"><svg><use href="#heart"/></svg></button></div>
      </div>

      <div class="designer">
        <div class="toolbar conn-bar">
          <i class="grip"></i>
          <button aria-label="Properties"><svg><use href="#props"/></svg></button>
          <button aria-label="Edit"><svg><use href="#edit"/></svg></button>
          <i class="sep"></i>
          <button aria-label="Save to repository"><svg><use href="#dbsave"/></svg></button>
          <i class="sep"></i>
          <span class="combo conn"><select aria-label="Connection"><option>DEMO Connection [ODBC Access Source]</option></select><svg><use href="#thin"/></svg></span>
          <i class="sep"></i>
          <button aria-label="Rename"><svg><use href="#rename"/></svg></button>
          <i class="sep"></i>
          <button aria-label="Find version"><svg><use href="#calfind"/></svg></button>
          <button aria-label="Add version"><svg><use href="#caladd"/></svg></button>
          <button aria-label="Restore version"><svg><use href="#calgo"/></svg></button>
          <button aria-label="Lock"><svg><use href="#lock"/></svg></button>
          <button class="more" aria-label="More"></button>
        </div>

        <div class="toolrow">
          <div class="toolbar small">
            <i class="grip"></i>
            <button aria-label="New"><svg><use href="#newdoc"/></svg></button>
            <button aria-label="Open"><svg><use href="#open"/></svg></button>
            <button aria-label="Save"><svg><use href="#save"/></svg></button>
            <button aria-label="Preview"><svg><use href="#preview"/></svg></button>
            <i class="sep"></i>
            <button aria-label="New page"><svg><use href="#newpage"/></svg></button>
            <button aria-label="Delete page"><svg><use href="#delpage"/></svg></button>
            <button aria-label="Page settings"><svg><use href="#psetup"/></svg></button>
            <button aria-label="Find"><svg><use href="#find"/></svg></button>
            <i class="sep"></i>
            <button aria-label="Cut"><svg><use href="#cutg"/></svg></button>
            <button aria-label="Copy"><svg><use href="#copyg"/></svg></button>
            <button aria-label="Paste"><svg><use href="#pasteg"/></svg></button>
            <i class="sep"></i>
            <button aria-label="Undo"><svg><use href="#undo"/></svg></button>
            <button aria-label="Redo"><svg><use href="#redo"/></svg></button>
            <i class="sep"></i>
            <button aria-label="Group"><svg><use href="#group"/></svg></button>
            <button aria-label="Ungroup"><svg><use href="#ungroup"/></svg></button>
            <i class="sep"></i>
            <button aria-label="Overlap"><svg><use href="#overlap"/></svg></button>
            <i class="sep"></i>
            <span class="combo flat zoom"><select aria-label="Zoom"><option>100%</option></select></span>
          </div>
          <div class="toolbar small">
            <i class="grip"></i>
            <button class="on" aria-label="Grid"><svg><use href="#grid"/></svg></button>
            <button class="on" aria-label="Snap to grid"><svg><use href="#snap"/></svg></button>
            <button aria-label="Fit to grid"><svg><use href="#fit"/></svg></button>
            <i class="sep"></i>
            <button aria-label="Align left"><svg><use href="#al"/></svg></button>
            <button aria-label="Align center"><svg><use href="#ac"/></svg></button>
            <button aria-label="Align right"><svg><use href="#ar"/></svg></button>
            <i class="sep"></i>
            <button aria-label="Align top"><svg><use href="#at"/></svg></button>
            <button aria-label="Align middle"><svg><use href="#am"/></svg></button>
            <button aria-label="Align bottom"><svg><use href="#ab"/></svg></button>
            <i class="sep"></i>
            <button aria-label="Space horizontally"><svg><use href="#dh"/></svg></button>
            <button aria-label="Space vertically"><svg><use href="#dv"/></svg></button>
            <i class="sep"></i>
            <button aria-label="Center horizontally"><svg><use href="#ch"/></svg></button>
            <button aria-label="Center vertically"><svg><use href="#cv"/></svg></button>
            <i class="sep"></i>
            <button aria-label="Same width"><svg><use href="#sw"/></svg></button>
            <button aria-label="Same height"><svg><use href="#sh"/></svg></button>
          </div>
          <div class="toolbar small">
            <i class="grip"></i>
            <button aria-label="Function"><svg><use href="#fx"/></svg></button>
          </div>
          <div class="toolbar small">
            <i class="grip"></i>
            <button aria-label="Top line"><svg><use href="#bt"/></svg></button>
            <button aria-label="Bottom line"><svg><use href="#bb"/></svg></button>
            <button aria-label="Left line"><svg><use href="#bl"/></svg></button>
            <button aria-label="Right line"><svg><use href="#br"/></svg></button>
            <i class="sep"></i>
            <button aria-label="All lines"><svg><use href="#ba"/></svg></button>
            <button aria-label="No lines"><svg><use href="#bdot"/></svg></button>
            <button aria-label="Edit frame"><svg><use href="#bset"/></svg></button>
            <i class="sep"></i>
            <button aria-label="Fill"><svg><use href="#bucket"/></svg></button>
            <button class="drop" aria-label="Fill colors"></button>
            <button aria-label="Fill style"><svg><use href="#rect"/></svg></button>
            <button aria-label="Line color"><svg><use href="#brush"/></svg></button>
            <button class="drop" aria-label="Line colors"></button>
            <button aria-label="Line style"><svg><use href="#dashes"/></svg></button>
            <span class="combo flat width"><select aria-label="Line width"><option>1</option></select></span>
          </div>
        </div>

        <div class="toolrow format">
          <div class="toolbar small">
            <i class="grip"></i>
            <span class="combo flat font"><svg class="ico"><use href="#ttk"/></svg><select aria-label="Font"><option>Arial</option></select></span>
            <span class="combo flat size"><select aria-label="Font size"><option>10</option></select></span>
            <button class="letter" aria-label="Bold"><b>B</b></button>
            <button class="letter" aria-label="Italic"><em>I</em></button>
            <button class="letter" aria-label="Underline"><u>U</u></button>
            <i class="sep"></i>
            <button aria-label="Font settings"><svg><use href="#tt"/></svg></button>
            <button aria-label="Font color"><svg><use href="#fc"/></svg></button>
            <button class="drop" aria-label="Font colors"></button>
            <button aria-label="Highlight"><svg><use href="#hl"/></svg></button>
            <button aria-label="Rotate text"><svg><use href="#rot"/></svg></button>
            <i class="sep"></i>
            <button aria-label="Text left"><svg><use href="#tl"/></svg></button>
            <button aria-label="Text center"><svg><use href="#tc"/></svg></button>
            <button aria-label="Text right"><svg><use href="#tr"/></svg></button>
            <button aria-label="Justify"><svg><use href="#tj"/></svg></button>
            <i class="sep"></i>
            <button aria-label="Text top"><svg><use href="#vt"/></svg></button>
            <button aria-label="Text middle"><svg><use href="#vm"/></svg></button>
            <button aria-label="Text bottom"><svg><use href="#vb"/></svg></button>
          </div>
        </div>

        <div class="design-area">
          <div class="palette">
            <button class="on" aria-label="Select"><svg><use href="#arrow"/></svg></button>
            <button aria-label="Hand"><svg><use href="#hand"/></svg></button>
            <button aria-label="Zoom"><svg><use href="#zoom"/></svg></button>
            <button aria-label="Edit text"><svg><use href="#tedit"/></svg></button>
            <button aria-label="Copy format"><svg><use href="#fmt"/></svg></button>
            <button aria-label="Insert band"><svg><use href="#conn"/></svg></button>
            <button aria-label="Text"><svg><use href="#memo"/></svg></button>
            <button aria-label="Picture"><svg><use href="#pic"/></svg></button>
            <button aria-label="Draw"><svg><use href="#pen"/></svg></button>
            <button aria-label="Subreport"><svg><use href="#sub"/></svg></button>
            <button aria-label="System text"><svg><use href="#sigma"/></svg></button>
            <button aria-label="Rich text"><svg><use href="#rich"/></svg></button>
            <button aria-label="OLE object"><svg><use href="#ole"/></svg></button>
            <button aria-label="Cross-tab"><svg><use href="#ctab"/></svg></button>
            <button aria-label="DB cross-tab"><svg><use href="#cdb"/></svg></button>
            <button aria-label="Check box"><svg><use href="#chk"/></svg></button>
            <button aria-label="Dialog list"><svg><use href="#dlg"/></svg></button>
            <button aria-label="List"><svg><use href="#dl2"/></svg></button>
            <button aria-label="Gradient"><svg><use href="#bandt"/></svg></button>
            <button aria-label="Chart"><svg><use href="#chart"/></svg></button>
            <button aria-label="Table"><svg><use href="#tbl"/></svg></button>
            <button aria-label="Map"><svg><use href="#map"/></svg></button>
            <button aria-label="Cellular text"><svg><use href="#cell"/></svg></button>
            <button aria-label="Zip code"><svg><use href="#zip"/></svg></button>
            <button aria-label="PDF"><svg><use href="#pdf"/></svg></button>
            <button aria-label="Gauge"><svg><use href="#gauge"/></svg></button>
            <button aria-label="Interval gauge"><svg><use href="#gauge"/></svg></button>
            <button aria-label="Digits"><svg><use href="#seg"/></svg></button>
            <button aria-label="Shapes"><svg><use href="#shape"/></svg></button>
            <button aria-label="Barcode"><svg><use href="#bar"/></svg></button>
          </div>

          <div class="design-main">
            <div class="tabset page-tabs">
              <button>Code</button>
              <button>Data</button>
              <button class="active">Page1</button>
            </div>

            <div class="panels">
              <div class="side">
                <section class="panel report-tree">
                  <h2>Report Tree<button aria-label="Close"><svg><use href="#close"/></svg></button></h2>
                  <div class="panel-body">
                    <ul class="tree tall">
                      <li class="branch">
                        <div class="node picked"><svg class="tw"><use href="#down"/></svg><span><svg class="ico"><use href="#page"/></svg>Page1</span></div>
                        <ul>
                          <li class="branch"><div class="node"><svg class="tw"><use href="#down"/></svg><svg class="ico"><use href="#bandi"/></svg>ReportTitle1</div>
                            <ul><li class="leaf"><svg class="ico"><use href="#memo"/></svg>Memo1</li></ul></li>
                          <li class="branch"><div class="node"><svg class="tw"><use href="#down"/></svg><svg class="ico"><use href="#bandi"/></svg>PageHeader1</div>
                            <ul>
                              <li class="leaf"><svg class="ico"><use href="#memo"/></svg>Memo2</li>
                              <li class="leaf"><svg class="ico"><use href="#memo"/></svg>Memo3</li>
                              <li class="leaf"><svg class="ico"><use href="#memo"/></svg>Memo4</li>
                              <li class="leaf"><svg class="ico"><use href="#memo"/></svg>Memo5</li>
                            </ul></li>
                          <li class="branch"><div class="node"><svg class="tw"><use href="#down"/></svg><svg class="ico"><use href="#bandi"/></svg>GroupHeader1</div>
                            <ul><li class="leaf"><svg class="ico"><use href="#memo"/></svg>Memo6</li></ul></li>
                          <li class="branch"><div class="node"><svg class="tw"><use href="#down"/></svg><svg class="ico"><use href="#bandi"/></svg>MasterData1</div>
                            <ul>
                              <li class="leaf"><svg class="ico"><use href="#memo"/></svg>Memo7</li>
                              <li class="leaf"><svg class="ico"><use href="#memo"/></svg>Memo8</li>
                              <li class="leaf"><svg class="ico"><use href="#memo"/></svg>Memo9</li>
                            </ul></li>
                          <li class="branch"><div class="node"><svg class="tw"><use href="#down"/></svg><svg class="ico"><use href="#bandi"/></svg>GroupFooter1</div>
                            <ul><li class="leaf"><svg class="ico"><use href="#memo"/></svg>Memo13</li></ul></li>
                          <li class="branch"><div class="node"><svg class="tw"><use href="#down"/></svg><svg class="ico"><use href="#bandi"/></svg>PageFooter1</div>
                            <ul><li class="leaf more-below"><svg class="ico"><use href="#memo"/></svg>Memo10</li></ul></li>
                        </ul>
                      </li>
                    </ul>
                    <svg class="expander"><use href="#dbl"/></svg>
                    <div class="vscroll report-scroll">
                      <button aria-label="Scroll up"><svg><use href="#up"/></svg></button>
                      <div class="track"><div class="thumb"></div></div>
                      <button aria-label="Scroll down"><svg><use href="#down"/></svg></button>
                    </div>
                  </div>
                </section>

                <section class="panel inspector">
                  <h2>Object Inspector<button aria-label="Close"><svg><use href="#close"/></svg></button></h2>
                  <span class="combo object"><select aria-label="Object"><option>Page1: TfrxReportPage</option></select><svg><use href="#thin"/></svg></span>
                  <div class="tabset">
                    <button class="active">Properties</button>
                    <button>Events</button>
                    <button>Favorites</button>
                  </div>
                  <div class="props">
                    <div class="props-list">
                      <table>
                        <tr><th>BackPicture</th><td>(Not assigned)</td></tr>
                        <tr><th>BackPicturePrintable</th><td><label><input type="checkbox" checked>True</label></td></tr>
                        <tr><th>BackPictureStretched</th><td><label><input type="checkbox" checked>True</label></td></tr>
                        <tr><th>BackPictureVisible</th><td><label><input type="checkbox" checked>True</label></td></tr>
                        <tr><th>BottomMargin</th><td>1</td></tr>
                        <tr><th>Color</th><td><i class="swatch"></i>clNone</td></tr>
                        <tr><th>Columns</th><td>0</td></tr>
                        <tr><th>DataSet</th><td>(Not assigned)</td></tr>
                        <tr><th>Duplex</th><td>dmNone</td></tr>
                        <tr><th>EndlessHeight</th><td><label><input type="checkbox">False</label></td></tr>
                        <tr><th>EndlessWidth</th><td><label><input type="checkbox">False</label></td></tr>
                        <tr class="group"><th>Font</th><td>(TFont)</td></tr>
                        <tr class="group"><th>Frame</th><td>(TfrxFrame)</td></tr>
                        <tr><th>LargeDesignHeight</th><td><label><input type="checkbox">False</label></td></tr>
                        <tr><th>LeftMargin</th><td>1</td></tr>
                        <tr><th>MirrorMargins</th><td><label><input type="checkbox">False</label></td></tr>
                        <tr class="group"><th>MirrorMode</th><td>[]</td></tr>
                      </table>
                    </div>
                    <div class="vscroll props-scroll">
                      <button aria-label="Scroll up"><svg><use href="#up"/></svg></button>
                      <div class="track"><div class="thumb"></div></div>
                      <button aria-label="Scroll down"><svg><use href="#down"/></svg></button>
                    </div>
                  </div>
                  <div class="hint"></div>
                </section>
              </div>

              <div class="side-split"><i></i></div>

              <div class="canvas">
                <div class="corner"><svg class="ico"><use href="#origin"/></svg></div>
                <div class="ruler-h">
                  <div class="scale">
                    <span>1</span><span>2</span><span>3</span><span>4</span><span>5</span><span>6</span><span>7</span><span>8</span><span>9</span><span>10</span><span>11</span><span>12</span><span>13</span><span>14</span><span>15</span><span>16</span><span>17</span><span>18</span><span>19</span><span class="mark">20</span><span>21</span><span>22</span><span>23</span><span>24</span><span>25</span><span>26</span><span>27</span><span>28</span>
                  </div>
                </div>
                <div class="ruler-v">
                  <div class="scale">
                    <span>1</span><span>2</span><span>3</span><span>4</span><span>5</span><span>6</span><span class="mark">7</span><span>8</span><span>9</span><span>10</span><span>11</span><span>12</span><span>13</span><span>14</span><span>15</span><span>16</span><span>17</span><span>18</span><span>19</span>
                  </div>
                </div>
                <div class="viewport">
                  <div class="sheet">
                    <div class="sheet-body">
                      <section class="band title">
                        <header><b>ReportTitle:</b> ReportTitle1</header>
                        <div class="memo m1">Price List</div>
                      </section>
                      <section class="band page-header">
                        <header><b>PageHeader:</b> PageHeader1</header>
                        <div class="memo m2"></div>
                        <div class="memo m3">ProductName</div>
                        <div class="memo m4">QuantityPerUnit</div>
                        <div class="memo m5">UnitPrice</div>
                      </section>
                      <section class="band group-header">
                        <header><b>GroupHeader:</b> GroupHeader1<span>ADOQuery."CategoryName"</span></header>
                        <div class="memo m6"><i>[</i>ADOQuery."CategoryName"<i>]</i></div>
                      </section>
                      <section class="band master">
                        <header><b>MasterData:</b> MasterData1<span><svg class="ico"><use href="#dbl-light"/></svg>ADOQuery</span></header>
                        <div class="memo m7"><i>[</i>ADOQuery."ProductName"<i>]</i></div>
                        <div class="memo m8"><i>[</i>ADOQuery."QuantityPerUnit"<i>]</i></div>
                        <div class="memo m9"><i>[</i>ADOQuery."</div>
                      </section>
                      <section class="band group-footer">
                        <header><b>GroupFooter:</b> GroupFooter1</header>
                        <div class="memo m13"><i>[</i>()COUNT</div>
                      </section>
                      <section class="band page-footer">
                        <header><b>PageFooter:</b> PageFooter1</header>
                        <div class="memo m10"></div>
                        <div class="memo m11">Page<br><i>[</i>Page#<i>]</i></div>
                      </section>
                    </div>
                  </div>
                </div>
                <div class="vscroll canvas-scroll">
                  <button aria-label="Scroll up"><svg><use href="#up"/></svg></button>
                  <div class="track"><div class="thumb"></div></div>
                  <button aria-label="Scroll down"><svg><use href="#down"/></svg></button>
                </div>
              </div>

              <section class="panel data-tree">
                <h2>Data Tree<button aria-label="Close"><svg><use href="#close"/></svg></button></h2>
                <div class="tabset">
                  <button class="active">Data</button>
                  <button>Varia...</button>
                  <button>Func...</button>
                  <button>Classes</button>
                </div>
                <div class="data-body">
                  <div class="toolbar">
                    <button aria-label="Dataset"><svg><use href="#db"/></svg></button>
                    <button aria-label="Sort"><svg><use href="#sort"/></svg></button>
                    <button class="drop" aria-label="Sort options"></button>
                    <button aria-label="Field mapping"><svg><use href="#dbmap"/></svg></button>
                    <button class="drop" aria-label="Mapping options"></button>
                    <button aria-label="Refresh"><svg><use href="#sync"/></svg></button>
                    <i class="sep"></i>
                    <button aria-label="Collapse"><svg><use href="#top"/></svg></button>
                  </div>
                  <div class="data-root"><svg class="ico"><use href="#db"/></svg><b>Data</b><svg class="expander"><use href="#dbl"/></svg></div>
                  <ul class="tree tall">
                    <li class="branch">
                      <div class="node"><svg class="tw"><use href="#down"/></svg><svg class="ico"><use href="#db"/></svg><b>ADOQuery</b></div>
                      <ul>
                        <li class="leaf"><svg class="ico"><use href="#fa"/></svg>CategoryName</li>
                        <li class="leaf"><svg class="ico"><use href="#fa"/></svg>ProductName</li>
                        <li class="leaf"><svg class="ico"><use href="#fa"/></svg>QuantityPerUnit</li>
                        <li class="leaf"><svg class="ico"><use href="#f0"/></svg>UnitPrice</li>
                      </ul>
                    </li>
                  </ul>
                </div>
              </section>
            </div>
          </div>
        </div>

        <footer class="design-status">
          <span class="units">Centimeters</span>
          <span class="coords"><svg class="ico"><use href="#pos"/></svg>19.95; 6.48</span>
          <span class="pagename">Page1</span>
        </footer>
      </div>
    </main>
  </div>

  <footer class="statusbar">
    <span class="state">Connected</span>
    <span class="state">Waiting</span>
    <span class="state">Failed</span>
    <span class="size">0kb</span>
    <span class="errors">0</span>
    <span class="count">0</span>
    <span class="date">01/07/2025 17:58:13</span>
    <span class="elapsed">00:00:01</span>
    <div class="progress" role="progressbar" aria-label="Progress" aria-valuenow="0">0%</div>
    <i class="resize"></i>
  </footer>

</body>
</html>
```
FILE: styles.css
```css
* {
  box-sizing: border-box;
}

:root {
  --wide: 11px/16px Roboto, Tahoma, sans-serif;
}

body {
  margin: 0;
  height: 100vh;
  display: flex;
  flex-direction: column;
  overflow: hidden;
  border: 1px solid #2b2b2f;
  background: #fff;
  color: #000;
  font: 10px/16px "Noto Sans", Tahoma, sans-serif;
}

button {
  margin: 0;
  padding: 0;
  border: none;
  background: none;
  color: inherit;
  font: inherit;
  display: flex;
  align-items: center;
  justify-content: center;
}

ul {
  list-style: none;
  margin: 0;
  padding: 0;
}

i,
em {
  font-style: normal;
}

svg {
  display: block;
  flex: none;
  width: 16px;
  height: 16px;
}

.defs {
  position: absolute;
  width: 0;
  height: 0;
}

.sprite {
  display: none;
}

/* window chrome */
.titlebar {
  flex: none;
  height: 30px;
  display: flex;
  align-items: flex-start;
  padding-left: 8px;
}

.titlebar .ico {
  margin-top: 7px;
}

.titlebar h1 {
  flex: 1;
  margin: 6px 0 0 6px;
  font: 12px/18px Roboto, "Segoe UI", sans-serif;
  white-space: nowrap;
}

.titlebar button {
  width: 46px;
  height: 29px;
}

.titlebar button svg {
  width: 10px;
  height: 10px;
}

.menubar {
  flex: none;
  height: 32px;
  display: flex;
  align-items: center;
  gap: 8px;
  padding: 0 0 4px 6px;
  font: var(--wide);
}

.menubar a {
  color: #000;
  text-decoration: none;
}

.menubar u {
  text-underline-offset: 2px;
}

.grip {
  flex: none;
  width: 3px;
  height: 18px;
  background: repeating-linear-gradient(#a8a8a8 0 2px, transparent 2px 4px);
}

.menubar .grip {
  width: 2px;
  margin-right: -1px;
}

.main-tabs {
  flex: none;
  height: 27px;
  display: flex;
  border-bottom: 1px solid #d0d0d0;
  font: var(--wide);
}

.main-tabs button {
  padding: 3px 17px 0;
  gap: 4px;
}

.main-tabs button.active {
  height: 27px;
  margin: 0 4px;
  padding: 2px 12px 0 10px;
  background: #fff;
  border: 1px solid #d0d0d0;
  border-bottom: none;
}

.workspace {
  flex: 1;
  min-height: 0;
  display: flex;
  margin: 0 3px 0 2px;
  border-left: 1px solid #d9d9d9;
  border-right: 1px solid #d0d0d0;
  border-bottom: 1px solid #d0d0d0;
}

/* shared toolbar parts */
.toolbar {
  flex: none;
  display: flex;
  align-items: center;
}

.toolbar button {
  width: 24px;
  height: 24px;
}

.toolbar .sep {
  width: 1px;
  height: 18px;
  margin: 0 5px 0 4px;
  background: #8c8c8c;
}

.toolbar.small button {
  width: 23px;
  height: 23px;
}

.toolbar.small .sep {
  margin: 0 4px 0 3px;
}

.toolbar button.on,
.palette button.on {
  background: #c5d3ee;
  border: 1px solid #7d9bdc;
}

.toolbar button.drop,
.toolbar.small button.drop {
  width: 14px;
}

.drop::after {
  content: "";
  border: 4px solid transparent;
  border-top-color: #000;
  border-bottom: none;
}

.toolbar button.more {
  width: 12px;
  height: 25px;
  flex-direction: column;
  justify-content: flex-end;
  padding-bottom: 4px;
  background: #c0c0c0;
}

.more span {
  font-size: 13px;
  line-height: 10px;
}

.more::after {
  content: "";
  width: 7px;
  height: 5px;
  margin-top: 3px;
  background: linear-gradient(#000, #000) 0 0 / 100% 1px no-repeat, linear-gradient(#000, #000) 50% 3px / 5px 1px no-repeat, linear-gradient(#000, #000) 50% 4px / 3px 1px no-repeat;
}

.vscroll,
.hscroll {
  flex: none;
  display: flex;
  background: #f0f0f0;
  color: #555;
}

.vscroll {
  width: 15px;
  flex-direction: column;
}

.hscroll {
  height: 15px;
  margin-right: 15px;
}

.vscroll button {
  height: 17px;
}

.hscroll button {
  width: 17px;
}

.vscroll button svg,
.hscroll button svg {
  width: 8px;
  height: 8px;
}

.track {
  flex: 1;
  display: grid;
}

.thumb {
  background: #cdcdcd;
}

.vscroll .thumb {
  grid-row: 2;
}

.hscroll .thumb {
  grid-column: 2;
}

/* trees */
.tree {
  flex: 1;
  min-width: 0;
  overflow: hidden;
  white-space: nowrap;
}

.node,
.leaf,
.leaf span,
.node span {
  display: flex;
  align-items: center;
  height: 16px;
}

.tree ul {
  padding-left: 19px;
}

.branch:not(:last-child) > ul {
  background: repeating-linear-gradient(#808080 0 1px, transparent 1px 2px) 0 0 / 1px 100% no-repeat;
}

.node .tw {
  width: 10px;
  height: 10px;
  margin-left: -5px;
  color: #404040;
}

.node.closed .tw {
  color: #a0a0a0;
}

.node .ico {
  margin: 0 4px 0 6px;
}

.leaf .ico {
  margin: 0 4px 0 1px;
}

.leaf::before {
  content: "";
  flex: none;
  align-self: flex-start;
  width: 10px;
  height: 50%;
  border-left: 1px dotted #808080;
  border-bottom: 1px dotted #808080;
}

.leaf:not(:last-child),
.leaf.more-below {
  background: repeating-linear-gradient(#808080 0 1px, transparent 1px 2px) 0 0 / 1px 100% no-repeat;
}

.leaf.selected span {
  padding-right: 5px;
  background: #d9d9d9;
}

.tree.tall .node,
.tree.tall .leaf,
.tree.tall .node span {
  height: 20px;
}

.tree.tall .tw {
  color: #a0a0a0;
}

/* left dock */
.objects {
  flex: none;
  width: 302px;
  display: flex;
  flex-direction: column;
  padding-bottom: 1px;
}

.dock-head {
  height: 19px;
  display: flex;
  justify-content: flex-end;
  align-items: center;
  padding-right: 2px;
  background: #ececec;
  color: #fff;
}

.dock-head svg {
  width: 8px;
  height: 8px;
}

.objects .toolbar {
  height: 27px;
  margin: 1px 0 2px 4px;
  padding-left: 1px;
  border-top: 1px solid #d9d9d9;
}

.objects .toolbar .grip {
  margin-right: 4px;
}

.objects .toolbar button.more {
  margin: 0 2px 0 auto;
}

.tree-wrap {
  flex: 1;
  min-height: 0;
  display: flex;
}

.objects .tree {
  padding-left: 31px;
}

.tree-scroll .track {
  grid-template-rows: 575fr 190fr 94fr;
}

.hscroll .track {
  grid-template-columns: 1fr 180fr 74fr;
}

.splitter {
  flex: none;
  width: 6px;
  display: flex;
  align-items: center;
  background: #f0f0f0;
}

.splitter i {
  width: 2px;
  height: 34px;
  margin: 0 0 0 2px;
  background: repeating-linear-gradient(#000 0 2px, transparent 2px 4px);
}

/* document area */
.documents {
  flex: 1;
  min-width: 0;
  display: flex;
  flex-direction: column;
  padding: 7px 1px 1px 0;
}

.doc-tabs {
  flex: none;
  height: 23px;
  display: flex;
  border-bottom: 1px solid #d0d0d0;
  font: var(--wide);
}

.doc-tab {
  height: 23px;
  display: flex;
  align-items: center;
  gap: 4px;
  padding: 1px 5px 0 7px;
}

.doc-tab button,
.doc-list button {
  width: 18px;
  height: 18px;
  margin-left: 4px;
  border: 1px solid #d0d0d0;
  border-radius: 3px;
}

.doc-tab button svg,
.doc-list button svg {
  width: 10px;
  height: 10px;
}

.doc-tab.active {
  position: relative;
  margin-left: 8px;
  background: #fff;
  border: 1px solid #d0d0d0;
  border-width: 1px 0 0 1px;
  padding: 0 5px 0 4px;
}

.doc-tab.active::after {
  content: "";
  position: absolute;
  top: -1px;
  right: -4px;
  width: 4px;
  height: 23px;
  border-right: 1px solid #d0d0d0;
  transform: skewX(14deg);
}

.doc-list {
  margin: 0 3px 0 auto;
  padding: 2px 1px;
  border: 1px solid #d0d0d0;
  border-bottom: none;
}

.doc-list button {
  margin: 0;
}

.designer {
  flex: 1;
  min-height: 0;
  display: flex;
  flex-direction: column;
  padding-top: 2px;
  border: 1px solid #d0d0d0;
  border-top: none;
}

.conn-bar {
  align-self: flex-start;
  height: 27px;
  margin: 0 0 3px 4px;
  padding-left: 4px;
  border-top: 1px solid #c8c8c8;
}

.conn-bar .grip {
  margin-right: 1px;
}

.conn-bar button.more {
  margin-left: 2px;
}

.combo {
  position: relative;
  display: flex;
  align-items: center;
}

.combo select {
  width: 100%;
  height: 100%;
  padding: 0 4px;
  appearance: none;
  border: 1px solid #7a7a7a;
  border-radius: 0;
  background: #fff;
  color: #000;
  font: var(--wide);
}

.combo > svg:last-child {
  position: absolute;
  right: 4px;
  width: 10px;
  height: 10px;
  color: #555;
}

.combo.conn {
  width: 269px;
  height: 20px;
  margin-bottom: 3px;
}

.combo.flat {
  height: 23px;
  padding: 3px;
  background: #f0f0f0;
}

.combo.flat select {
  border: none;
  padding: 0 1px;
}

.combo.flat::after {
  content: "";
  position: absolute;
  right: 3px;
  border: 4px solid transparent;
  border-top-color: #000;
  border-bottom: none;
}

.combo.zoom {
  width: 53px;
}

.combo.width {
  width: 41px;
}

.combo.font {
  width: 146px;
  background: #fff;
}

.combo.size {
  width: 38px;
  margin: 0 1px 0 6px;
}

.toolrow {
  flex: none;
  display: flex;
  height: 28px;
  padding-left: 3px;
}

.toolrow.format {
  height: 26px;
}

.toolrow .toolbar {
  height: 26px;
  padding: 0 2px;
  margin-right: 1px;
  border-right: 1px solid #d0d0d0;
  border-bottom: 1px solid #c8c8c8;
}

.toolrow .grip {
  margin-right: 3px;
}

.letter {
  color: #444;
  font: 16px "Liberation Serif", serif;
}

.letter em {
  font-style: italic;
}

.design-area {
  flex: 1;
  min-height: 0;
  display: flex;
}

.palette {
  flex: none;
  width: 28px;
  padding: 2px 3px 0 2px;
}

.palette button {
  width: 23px;
  height: 23px;
}

.design-main {
  flex: 1;
  min-width: 0;
  display: flex;
  flex-direction: column;
}

/* slanted tabs */
.tabset {
  flex: none;
  height: 19px;
  display: flex;
  gap: 2px;
  padding: 0 10px;
  border-bottom: 1px solid #a0a0a0;
  background: repeating-conic-gradient(#f0f0f0 0 25%, #fff 0 50%) 0 0 / 2px 2px;
}

.tabset button {
  position: relative;
  z-index: 0;
  height: 17px;
  margin-top: 2px;
  padding: 0 4px;
}

.tabset button::before,
.tabset button::after {
  content: "";
  position: absolute;
  z-index: -1;
  top: 0;
  bottom: 0;
  width: 60%;
  background: #fff;
  border-top: 1px solid #a0a0a0;
}

.tabset button::before {
  left: 0;
  border-left: 1px solid #a0a0a0;
  transform: skewX(-15deg);
}

.tabset button::after {
  right: 0;
  border-right: 1px solid #a0a0a0;
  transform: skewX(15deg);
}

.tabset button.active::before,
.tabset button.active::after {
  background: #f4f4f4;
}

.panels {
  flex: 1;
  min-height: 0;
  display: flex;
  padding-top: 2px;
}

.panel {
  display: flex;
  flex-direction: column;
  min-height: 0;
}

.panel h2 {
  flex: none;
  height: 20px;
  display: flex;
  align-items: center;
  justify-content: space-between;
  margin: 0;
  padding: 0 4px;
  background: #cddced;
  font-size: 12px;
  font-weight: normal;
}

.panel h2 svg {
  width: 10px;
  height: 10px;
  color: #4d5a68;
}

.side {
  flex: none;
  width: 231px;
  display: flex;
  flex-direction: column;
  gap: 4px;
}

.report-tree {
  flex: 383;
}

.panel-body {
  flex: 1;
  min-height: 0;
  display: flex;
  position: relative;
  margin-top: 1px;
  padding: 1px 4px 2px 0;
  border: 2px solid #b8b8b8;
  border-bottom-width: 3px;
}

.report-tree .tree {
  padding: 1px 0 0 13px;
}

.picked .tw {
  margin-right: 4px;
}

.picked span {
  padding-right: 3px;
  background: #b9b9b9;
}

.picked .ico {
  margin: 0 3px 0 2px;
}

.expander {
  width: 14px;
  height: 14px;
}

.panel-body .expander {
  position: absolute;
  right: 24px;
  bottom: 6px;
  transform: rotate(-90deg);
}

.report-scroll .track {
  grid-template-rows: 52fr 235fr 32fr;
}

.inspector {
  flex: 409;
}

.combo.object {
  flex: none;
  height: 22px;
  margin: 2px 0 6px;
}

.combo.object select {
  padding: 0 3px;
}

.inspector .tabset {
  height: 22px;
  padding-top: 3px;
}

.props {
  flex: 1;
  min-height: 0;
  display: flex;
  border: 1px solid #a0a0a0;
  border-top: none;
  padding-right: 2px;
}

.props-list {
  flex: 1;
  min-width: 0;
  overflow: hidden;
}

.props table {
  width: 100%;
  border-collapse: collapse;
  table-layout: fixed;
}

.props th,
.props td {
  height: 16px;
  padding: 0;
  border-bottom: 1px solid #ececec;
  line-height: 15px;
  white-space: nowrap;
  overflow: hidden;
}

.props th {
  width: 111px;
  padding-left: 13px;
  border-right: 1px solid #ececec;
  font-weight: normal;
  text-align: left;
}

.props td {
  padding-left: 2px;
  color: #000080;
}

.props .group th {
  padding-left: 1px;
}

.group th::before {
  content: "";
  display: inline-block;
  width: 9px;
  height: 9px;
  margin-right: 3px;
  border: 1px solid #a0a0a0;
  background: linear-gradient(#555, #555) 50% 50% / 5px 1px no-repeat, linear-gradient(#555, #555) 50% 50% / 1px 5px no-repeat;
  vertical-align: -1px;
}

.props label {
  display: flex;
  align-items: center;
}

.props input,
.swatch {
  flex: none;
  width: 11px;
  height: 11px;
  margin: 0 2px 0 0;
  appearance: none;
  border: 1px solid #a0a0a0;
  background: #fff;
}

.swatch {
  display: inline-block;
  vertical-align: -2px;
  background: #000;
}

.props input:checked::after {
  content: "";
  display: block;
  width: 3px;
  height: 6px;
  margin: 0 0 0 3px;
  border: 2px solid #000;
  border-width: 0 2px 2px 0;
  box-sizing: content-box;
  transform: rotate(45deg) translate(-1px, 0);
}

.props-scroll .track {
  grid-template-rows: 1fr 118fr 115fr;
}

.hint {
  flex: none;
  height: 65px;
  margin-top: 3px;
  border: 1px solid #a0a0a0;
}

.side-split {
  flex: none;
  width: 6px;
  display: flex;
  align-items: center;
  background: #fff;
}

.side-split i {
  width: 6px;
  height: 34px;
  background: radial-gradient(#666 1px, #d0d0d0 1px) 0 0 / 6px 5px;
}

/* report canvas */
.canvas {
  flex: 1;
  min-width: 0;
  display: grid;
  grid-template-columns: 21px 1fr 17px;
  grid-template-rows: 22px 1fr;
  background: #f0f0f0;
}

.corner {
  padding: 0 0 0 1px;
}

.ruler-h {
  grid-column: 2 / 4;
  min-width: 0;
  padding: 3px 0 4px 50px;
}

.ruler-v {
  min-height: 0;
  padding: 50px 5px 0 3px;
}

.scale {
  height: 100%;
  display: flex;
  overflow: hidden;
  background: #fff;
  font: 10px/16px "Liberation Sans", sans-serif;
}

.ruler-h .scale {
  padding-left: 19px;
}

.ruler-h span {
  flex: 0 0 1cm;
  padding-left: 3px;
  text-align: center;
  background: linear-gradient(#000, #000) 0 50% / 1px 4px no-repeat;
}

.ruler-h .mark {
  background: linear-gradient(#000, #000) 0 50% / 1px 4px no-repeat, linear-gradient(#000, #000) 50% 0 / 1px 100% no-repeat;
}

.ruler-v .scale {
  flex-direction: column;
  padding-top: 19px;
  line-height: 14px;
}

.ruler-v span {
  flex: 0 0 1cm;
  writing-mode: vertical-rl;
  transform: rotate(180deg);
  text-align: center;
  background: linear-gradient(#000, #000) 50% 100% / 4px 1px no-repeat;
}

.ruler-v .mark {
  background: linear-gradient(#000, #000) 50% 100% / 100% 1px no-repeat;
}

.viewport {
  min-width: 0;
  min-height: 0;
  overflow: hidden;
  padding: 10px 0 0 10px;
  background: #808080;
}

.sheet {
  width: 21cm;
  height: 29.7cm;
  padding: 36px 34px 36px 36px;
  background: #fff;
  border: 1px solid #505050;
  border-right-width: 2px;
}

.sheet-body {
  height: 100%;
  padding-bottom: 1px;
  outline: 1px dashed #b5b5b5;
  background:
    linear-gradient(90deg, #e4e4e4 1px, transparent 1px) 0 0 / 1cm 1cm,
    linear-gradient(#e4e4e4 1px, transparent 1px) 0 0 / 1cm 1cm,
    linear-gradient(90deg, #f6f6f6 1px, transparent 1px) 19px 0 / 1cm 1cm,
    linear-gradient(#f6f6f6 1px, transparent 1px) 0 19px / 1cm 1cm;
}

.band {
  position: relative;
  border: 1px solid #808080;
}

.band header {
  display: flex;
  gap: 3px;
  height: 18px;
  padding: 0 3px 0 5px;
  background: #f0f0f0;
}

.band header b {
  font-size: 11px;
}

.band header span {
  display: flex;
  align-items: center;
  margin-left: auto;
}

.band header .ico {
  width: 14px;
  height: 14px;
}

.title {
  height: 46px;
}

.page-header {
  height: 43px;
  margin-top: 3px;
  border-bottom: 2px solid #000;
}

.group-header {
  height: 47px;
  margin-top: 40px;
}

.master {
  height: 40px;
  margin-top: 2px;
}

.master header {
  background: #dfa630;
}

.group-footer {
  height: 88px;
  margin-top: 3px;
}

.page-footer {
  height: 47px;
  margin-top: 39px;
}

/* report objects keep the coordinates they have on the page */
.memo {
  --k: linear-gradient(#000, #000);
  position: absolute;
  top: 18px;
  left: -1px;
  height: 21px;
  padding: 1px 2px;
  overflow: hidden;
  white-space: nowrap;
  color: #222;
  font: 13px/15px "Liberation Sans", Arial, sans-serif;
  background:
    var(--k) 0 0 / 4px 1px, var(--k) 0 0 / 1px 4px,
    var(--k) 100% 0 / 4px 1px, var(--k) 100% 0 / 1px 4px,
    var(--k) 0 100% / 4px 1px, var(--k) 0 100% / 1px 4px,
    var(--k) 100% 100% / 4px 1px, var(--k) 100% 100% / 1px 4px;
  background-repeat: no-repeat;
}

.memo i {
  color: #0000ff;
}

.m1 {
  width: calc(100% + 2px);
  height: 24px;
  background-color: #808080;
  color: #fff;
  font-size: 16px;
  font-weight: bold;
  line-height: 22px;
  text-align: center;
}

.m2 {
  width: calc(100% + 2px);
}

.m3,
.m4,
.m5 {
  color: #800000;
  font-weight: bold;
}

.page-header .memo {
  height: 24px;
  padding-top: 2px;
}

.m3,
.m7 {
  width: 399px;
}

.m4,
.m8 {
  left: 397px;
  width: 194px;
}

.m5,
.m9 {
  left: 590px;
  width: 87px;
}

.m6 {
  width: 342px;
  height: 24px;
  padding-top: 5px;
  background-color: #f3f3f3;
  color: #8b1a1a;
  font-weight: bold;
}

.m6 i {
  font-weight: normal;
}

.m13 {
  top: 22px;
  left: 397px;
  width: 95px;
}

.m10 {
  top: 17px;
  width: calc(100% + 2px);
  height: 26px;
  border-top: 2px solid #000;
}

.m11 {
  top: 19px;
  left: auto;
  right: -1px;
  width: 76px;
  height: 24px;
  padding: 2px 1px;
  text-align: right;
}

.canvas-scroll {
  width: 17px;
  border: 1px solid #f0f0f0;
}

.canvas-scroll .track {
  grid-template-rows: 1fr 501fr 237fr;
}

.data-tree {
  flex: none;
  width: 185px;
  margin: 0 0 0 6px;
}

.data-tree .tabset {
  padding: 0 8px;
}

.data-tree .tabset button {
  padding: 0 5px;
}

.data-body {
  flex: 1;
  padding: 2px;
  border: 1px solid #a0a0a0;
  border-width: 0 2px 2px 1px;
}

.data-body .toolbar {
  height: 24px;
  margin-bottom: 1px;
  background: #f0f0f0;
}

.data-body .drop {
  margin-left: 2px;
}

.data-body .sep {
  margin: 0 0 0 auto;
}

.data-body .toolbar button:last-child {
  margin: 0 4px 0 12px;
}

.data-root {
  display: flex;
  align-items: center;
  gap: 5px;
  height: 20px;
  padding: 0 4px;
  font-size: 11px;
}

.data-root .expander {
  margin-left: auto;
}

.data-body .tree {
  padding-left: 11px;
}

.data-body .tree b {
  font-size: 11px;
}

.design-status {
  flex: none;
  height: 22px;
  display: flex;
  align-items: center;
  padding-left: 2px;
  border-top: 1px solid #d0d0d0;
  background: #f0f0f0;
}

.design-status span {
  display: flex;
  align-items: center;
  gap: 2px;
}

.units {
  width: 74px;
  border-right: 1px solid #d0d0d0;
}

.coords {
  width: 229px;
  padding-left: 5px;
  border-right: 1px solid #d0d0d0;
  font: var(--wide);
}

.pagename {
  padding-left: 4px;
}

/* main status bar */
.statusbar {
  flex: none;
  height: 19px;
  margin-top: 5px;
  display: flex;
  align-items: center;
  padding: 0 0 2px 4px;
  border-top: 1px solid #d0d0d0;
  font: var(--wide);
}

.state {
  flex: none;
  width: 48px;
}

.state:first-child {
  width: 64px;
}

.size {
  width: 417px;
  margin-right: 6px;
  text-align: right;
}

.errors {
  width: 36px;
  background: #f00;
  text-align: center;
}

.count {
  width: 28px;
  text-align: center;
}

.date {
  width: 115px;
}

.elapsed {
  width: 71px;
}

.progress {
  flex: 1;
  height: 15px;
  border: 1px solid #0a64c0;
  background: #eee;
  line-height: 13px;
  text-align: center;
}

.resize {
  width: 16px;
  height: 16px;
  margin-left: 2px;
  background: radial-gradient(#bbb 1px, transparent 1px) 0 0 / 4px 4px;
  clip-path: polygon(100% 0, 100% 100%, 0 100%);
}
```
